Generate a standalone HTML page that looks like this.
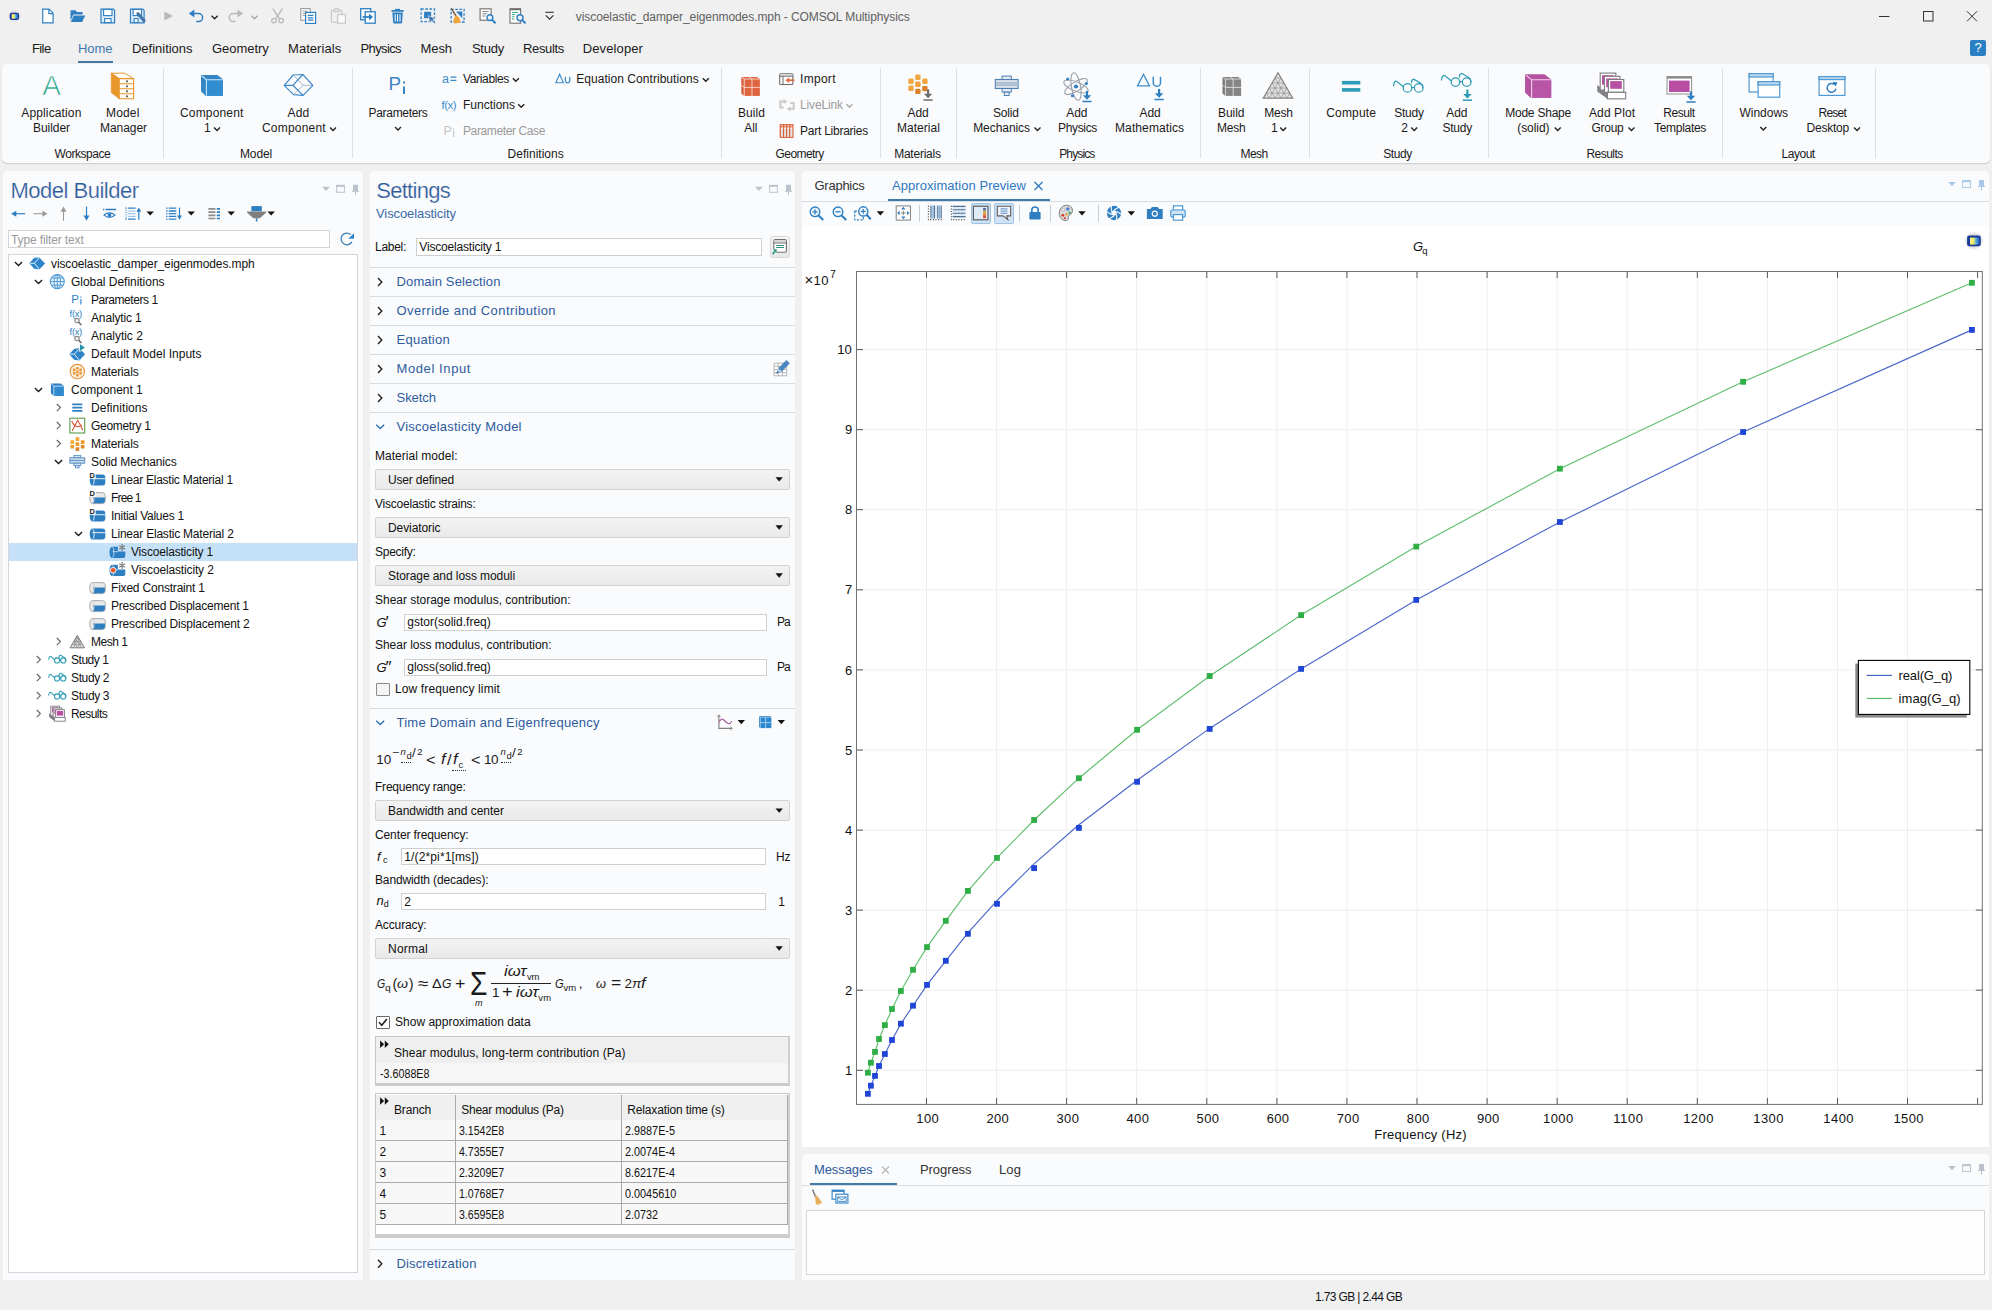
<!DOCTYPE html>
<html><head><meta charset="utf-8"><title>COMSOL Multiphysics</title>
<style>
html,body{margin:0;padding:0;}
body{width:1992px;height:1310px;overflow:hidden;background:#f0f0f0;position:relative;font-family:'Liberation Sans',sans-serif;}
body>div,body>span,body>svg{position:absolute;}
span{white-space:pre;}
svg{overflow:visible;}
</style></head><body>
<span style="left:575.80px;top:11.06px;font-size:12px;line-height:12px;color:#606060;letter-spacing:-0.081px;">viscoelastic_damper_eigenmodes.mph - COMSOL Multiphysics</span>
<svg style="left:7px;top:8px;" width="15" height="16" viewBox="-0.300 -0.500 15.000 16.000"><defs><linearGradient id="LGs" x1="0" y1="0" x2="1" y2="0"><stop offset="0" stop-color="#f6f28a"/><stop offset="0.38" stop-color="#f3e960"/><stop offset="0.62" stop-color="#55b0e6"/><stop offset="1" stop-color="#1f4fae"/></linearGradient><radialGradient id="LHs"><stop offset="0.6" stop-color="#d2d2d7" stop-opacity="1"/><stop offset="1" stop-color="#e8e8ec" stop-opacity="0"/></radialGradient></defs><ellipse cx="7" cy="7.600" rx="6.800" ry="6.400" fill="url(#LHs)"/><rect x="2.4" y="4.2" width="9.4" height="7.2" rx="2.2" fill="#1c3a96"/><path d="M4.4 5.6h6.4v4.6h-6.4z" fill="url(#LGs)"/><path d="M0 5.6h0v4.6h-0z" fill="#1c3a96" opacity="0.0"/></svg>
<svg style="left:39px;top:8px;" width="17" height="16" viewBox="-0.900 0.000 17.000 16.000"><path d="M2.8 1.2h6.4l4 4v9.6H2.8z" fill="#fff" stroke="#2e7fc2" stroke-width="1.2"/><path d="M9 1.4v4.2h4.2" fill="none" stroke="#2e7fc2" stroke-width="1.2"/></svg>
<svg style="left:69px;top:8px;" width="17" height="16" viewBox="-0.700 0.000 17.000 16.000"><path d="M0.8 2.2h5l1.4 1.8h5.6v2.6H3.6L0.8 13z" fill="#2e7fc2"/><path d="M4 7.4h11.6L12.4 14H1.2z" fill="#2e7fc2"/></svg>
<svg style="left:99px;top:8px;" width="17" height="16" viewBox="-0.800 0.000 17.000 16.000"><path d="M1.2 1.2h12.4l1.2 1.2v12.4H1.2z" fill="#dcebf8" stroke="#2e7fc2" stroke-width="1.2"/><rect x="3.8" y="1.4" width="8.4" height="6.2" fill="#fff" stroke="#2e7fc2" stroke-width="1.1"/><rect x="4.8" y="10.6" width="6.4" height="4" fill="#fff" stroke="#2e7fc2" stroke-width="1.1"/></svg>
<svg style="left:129px;top:8px;" width="18" height="16" viewBox="-0.300 0.000 18.000 16.000"><path d="M1.2 1.2h12.4l1.2 1.2v12.4H1.2z" fill="#dcebf8" stroke="#2e7fc2" stroke-width="1.2"/><rect x="3.8" y="1.4" width="8.4" height="6.2" fill="#fff" stroke="#2e7fc2" stroke-width="1.1"/><rect x="4.8" y="10.6" width="4" height="4" fill="#fff" stroke="#2e7fc2" stroke-width="1.1"/><path d="M7.5 5.2l2.2-0.6 7 8.2-2.2 2-7-8z" fill="#3f76ad"/><path d="M7.2 4.6l2.4 0.2-2 1.8z" fill="#2b4f78"/></svg>
<svg style="left:163px;top:11px;" width="11" height="10" viewBox="-0.700 0.000 11.000 10.000"><path d="M0.6 0.4l8.6 4.6-8.6 4.6z" fill="#b9b9b9"/></svg>
<svg style="left:188px;top:9px;" width="17" height="14" viewBox="-0.200 0.000 17.000 14.000"><path d="M5.2 4.6h5.2a4 4 0 0 1 0 8H8" fill="none" stroke="#2e7fc2" stroke-width="1.5"/><path d="M0.6 4.6l5.6-4v8z" fill="#2e7fc2"/></svg>
<svg style="left:210px;top:14px;" width="9" height="7" viewBox="-0.600 -0.500 9.000 7.000"><path d="M1 1.2l3 3 3-3" stroke="#222" stroke-width="1.4" fill="none"/></svg>
<svg style="left:227px;top:9px;" width="17" height="14" viewBox="-0.700 0.000 17.000 14.000"><path d="M10.8 4.6H5.6a4 4 0 0 0 0 8H8" fill="none" stroke="#b9b9b9" stroke-width="1.5"/><path d="M15.4 4.6l-5.6-4v8z" fill="#b9b9b9"/></svg>
<svg style="left:250px;top:14px;" width="9" height="7" viewBox="-0.500 -0.500 9.000 7.000"><path d="M1 1.2l3 3 3-3" stroke="#a8a8a8" stroke-width="1.4" fill="none"/></svg>
<svg style="left:270px;top:8px;" width="15" height="16" viewBox="-0.600 0.000 15.000 16.000"><path d="M2.2 0.6l6.6 10M11.8 0.6l-6.6 10" stroke="#b9b9b9" stroke-width="1.4" fill="none"/><circle cx="3.4" cy="12.6" r="2.3" fill="none" stroke="#b9b9b9" stroke-width="1.3"/><circle cx="10.6" cy="12.6" r="2.3" fill="none" stroke="#b9b9b9" stroke-width="1.3"/></svg>
<svg style="left:300px;top:8px;" width="17" height="16" viewBox="-0.200 0.000 17.000 16.000"><rect x="0.6" y="0.6" width="9.4" height="11.6" fill="#fff" stroke="#9a9a9a" stroke-width="1.1"/><path d="M2.4 3.2h5M2.4 5.4h3M2.4 7.6h3" stroke="#9a9a9a" stroke-width="1"/><rect x="5.4" y="4.4" width="10" height="11" fill="#fff" stroke="#2e7fc2" stroke-width="1.2"/><path d="M7.6 7.4h5.6M7.6 9.8h5.6M7.6 12.2h5.6" stroke="#2e7fc2" stroke-width="1.2"/></svg>
<svg style="left:330px;top:8px;" width="17" height="16" viewBox="-0.400 0.000 17.000 16.000"><rect x="1" y="2.2" width="10.4" height="12" rx="1" fill="#efefef" stroke="#c4c4c4" stroke-width="1.1"/><rect x="3.6" y="0.8" width="5.2" height="3" rx="0.8" fill="#e2e2e2" stroke="#c4c4c4" stroke-width="1"/><rect x="7.2" y="6.6" width="7.8" height="8.6" fill="#fafafa" stroke="#c4c4c4" stroke-width="1.1"/></svg>
<svg style="left:360px;top:8px;" width="16" height="16" viewBox="0.000 0.000 16.000 16.000"><rect x="0.7" y="0.7" width="10" height="11" fill="#fff" stroke="#2e7fc2" stroke-width="1.3"/><rect x="5.2" y="3.8" width="10" height="11.4" fill="#fff" stroke="#2e7fc2" stroke-width="1.3"/><path d="M2.6 9h8" stroke="#2e7fc2" stroke-width="1.8"/><path d="M9 5.6l4 3.4-4 3.4z" fill="#2e7fc2"/></svg>
<svg style="left:390px;top:8px;" width="15" height="16" viewBox="-0.600 0.000 15.000 16.000"><path d="M4.6 0.8h4.8v1.4H4.6z" fill="#2e7fc2"/><rect x="0.8" y="2" width="12.4" height="1.8" rx="0.5" fill="#2e7fc2"/><path d="M1.8 4.6h10.4l-0.7 10a1.2 1.2 0 0 1-1.2 1H3.7a1.2 1.2 0 0 1-1.2-1z" fill="#2e7fc2"/><path d="M4.6 6.2v7.4M7 6.2v7.4M9.4 6.2v7.4" stroke="#fff" stroke-width="1"/></svg>
<svg style="left:420px;top:8px;" width="17" height="16" viewBox="-0.300 0.000 17.000 16.000"><rect x="0.8" y="1" width="13.4" height="12.6" fill="none" stroke="#2e7fc2" stroke-width="1.3" stroke-dasharray="2.6 1.6"/><rect x="3.8" y="3.8" width="7" height="6.4" fill="#2e7fc2"/><path d="M8 7.6l7.6 3.2-3 0.8 2.6 3.2-1.2 1-2.6-3.2-1.8 2.4z" fill="#3f76ad" stroke="#fff" stroke-width="0.5"/></svg>
<svg style="left:449px;top:8px;" width="17" height="16" viewBox="-0.700 0.000 17.000 16.000"><rect x="1.4" y="1.4" width="13" height="12.6" fill="none" stroke="#2e7fc2" stroke-width="1.3" stroke-dasharray="2.6 1.6"/><path d="M6.4 3.6h6.2v6.6z" fill="#2e7fc2"/><path d="M1.6 0.4l5.2 8.4" stroke="#6b4a2a" stroke-width="1.3"/><path d="M5.6 7.6l3.8 1.6 1.4 5.6-6.2 0.8-1-2.4z" fill="#f0a43a"/></svg>
<svg style="left:479px;top:8px;" width="18" height="16" viewBox="-0.300 0.000 18.000 16.000"><rect x="0.8" y="0.8" width="11" height="11.4" fill="#fff" stroke="#7a7a7a" stroke-width="1.2"/><path d="M3 3.6h6.4M3 5.8h5M3 8h3.4" stroke="#8a8a8a" stroke-width="1"/><circle cx="10.6" cy="9.6" r="2.9" fill="#eaf3fb" stroke="#2e7fc2" stroke-width="1.4"/><path d="M12.8 11.8l3.4 3.4" stroke="#2e7fc2" stroke-width="2"/></svg>
<svg style="left:509px;top:8px;" width="18" height="16" viewBox="-0.200 0.000 18.000 16.000"><rect x="0.8" y="0.8" width="10.6" height="14.4" fill="#fff" stroke="#7a7a7a" stroke-width="1.2"/><path d="M0.8 1.4h10.6" stroke="#6a6a6a" stroke-width="1.6"/><path d="M2.8 4.4h6M2.8 6.6h3.4M2.8 8.8h2.4M2.8 11h2.4" stroke="#3aa58a" stroke-width="1"/><circle cx="10.8" cy="9.8" r="3" fill="#eaf3fb" stroke="#2e7fc2" stroke-width="1.4"/><path d="M13 12l3.4 3.4" stroke="#2e7fc2" stroke-width="2"/></svg>
<svg style="left:544px;top:11px;" width="11" height="10" viewBox="-0.600 -0.500 11.000 10.000"><path d="M0.8 0.8h8.4" stroke="#333" stroke-width="1.1"/><path d="M1.2 3.8l3.8 3.8 3.8-3.8" stroke="#333" stroke-width="1.2" fill="none"/></svg>
<svg style="left:1879px;top:11px;" width="100" height="12" viewBox="0.000 0.000 100.000 12.000"><path d="M0 5.5h10.5" stroke="#333" stroke-width="1" fill="none"/><rect x="44.5" y="0.5" width="9.5" height="9.5" fill="none" stroke="#333" stroke-width="1"/><path d="M88 0.3l10 10M98 0.3l-10 10" stroke="#333" stroke-width="1" fill="none"/></svg>
<span style="left:32.00px;top:41.54px;font-size:13px;line-height:13px;color:#1a1a1a;letter-spacing:-0.613px;">File</span>
<span style="left:78.00px;top:41.54px;font-size:13px;line-height:13px;color:#3f78ad;letter-spacing:-0.047px;">Home</span>
<span style="left:132.00px;top:41.54px;font-size:13px;line-height:13px;color:#1a1a1a;letter-spacing:-0.018px;">Definitions</span>
<span style="left:212.00px;top:41.54px;font-size:13px;line-height:13px;color:#1a1a1a;letter-spacing:-0.041px;">Geometry</span>
<span style="left:288.00px;top:41.54px;font-size:13px;line-height:13px;color:#1a1a1a;letter-spacing:0.056px;">Materials</span>
<span style="left:360.50px;top:41.54px;font-size:13px;line-height:13px;color:#1a1a1a;letter-spacing:-0.614px;">Physics</span>
<span style="left:420.50px;top:41.54px;font-size:13px;line-height:13px;color:#1a1a1a;letter-spacing:-0.074px;">Mesh</span>
<span style="left:471.90px;top:41.54px;font-size:13px;line-height:13px;color:#1a1a1a;letter-spacing:-0.230px;">Study</span>
<span style="left:523.00px;top:41.54px;font-size:13px;line-height:13px;color:#1a1a1a;letter-spacing:-0.366px;">Results</span>
<span style="left:582.80px;top:41.54px;font-size:13px;line-height:13px;color:#1a1a1a;letter-spacing:0.104px;">Developer</span>
<div style="left:78px;top:61px;width:34.5px;height:2px;background:#3f7aa8;"></div>
<div style="left:1970px;top:40px;width:16px;height:16px;background:#2b7fc4;border-radius:2px;"></div>
<span style="left:1974.38px;top:41.24px;font-size:13px;line-height:13px;color:#fff;">?</span>
<div style="left:2px;top:63.5px;width:1988px;height:99px;background:#fafbfd;border-radius:5px;box-shadow:0 1px 1.5px rgba(0,0,0,0.16);"></div>
<div style="left:162.5px;top:67.5px;width:1px;height:90px;background:#dcdfe3;"></div>
<div style="left:352.0px;top:67.5px;width:1px;height:90px;background:#dcdfe3;"></div>
<div style="left:721.2px;top:67.5px;width:1px;height:90px;background:#dcdfe3;"></div>
<div style="left:880.0px;top:67.5px;width:1px;height:90px;background:#dcdfe3;"></div>
<div style="left:956.0px;top:67.5px;width:1px;height:90px;background:#dcdfe3;"></div>
<div style="left:1200.0px;top:67.5px;width:1px;height:90px;background:#dcdfe3;"></div>
<div style="left:1309.0px;top:67.5px;width:1px;height:90px;background:#dcdfe3;"></div>
<div style="left:1488.0px;top:67.5px;width:1px;height:90px;background:#dcdfe3;"></div>
<div style="left:1722.0px;top:67.5px;width:1px;height:90px;background:#dcdfe3;"></div>
<div style="left:1875.0px;top:67.5px;width:1px;height:90px;background:#dcdfe3;"></div>
<svg style="left:41px;top:75px;" width="21" height="20" viewBox="-0.500 0.000 21.000 20.000"><text x="10" y="19.900" text-anchor="middle" font-family="Liberation Sans" font-size="28" fill="#23a184" stroke="#fafbfd" stroke-width="0.700">A</text></svg>
<span style="left:21.25px;top:106.96px;font-size:12px;line-height:12px;color:#1a1a1a;letter-spacing:0.139px;">Application</span>
<span style="left:33.00px;top:121.96px;font-size:12px;line-height:12px;color:#1a1a1a;letter-spacing:-0.051px;">Builder</span>
<svg style="left:111px;top:72px;" width="24" height="27" viewBox="0.000 0.000 24.000 27.000"><path d="M0.300 1.200H13.600L22.600 6.650H8.200z" fill="#fffdf6" stroke="#e8952f" stroke-width="1" stroke-linejoin="round"/><path d="M0.300 1.200V20.500L8.200 26.800V6.650z" fill="#e8972b" stroke="#e8952f" stroke-width="0.800" stroke-linejoin="round"/><path d="M8.200 6.650H22.600V26.800H8.200z" fill="#fffdf6" stroke="#e8952f" stroke-width="1.100"/><path d="M8.200 11.800H22.600M8.200 16.800H22.600M8.200 21.700H22.600" stroke="#e8952f" stroke-width="1.100"/><g fill="#5a5a5a"><rect x="15" y="8.400" width="1.900" height="1.800"/><rect x="15" y="13.400" width="1.900" height="1.800"/><rect x="15" y="18.400" width="1.900" height="1.800"/><rect x="15" y="23.400" width="1.900" height="1.800"/></g></svg>
<span style="left:106.00px;top:106.96px;font-size:12px;line-height:12px;color:#1a1a1a;letter-spacing:0.163px;">Model</span>
<span style="left:100.00px;top:121.96px;font-size:12px;line-height:12px;color:#1a1a1a;letter-spacing:-0.054px;">Manager</span>
<span style="left:54.50px;top:148.26px;font-size:12px;line-height:12px;color:#1a1a1a;letter-spacing:-0.446px;">Workspace</span>
<svg style="left:200px;top:74px;" width="24" height="22" viewBox="-0.500 0.000 24.000 22.000"><path d="M0.500 1H16.900L22.500 5.300V21.800H5.200L0.500 17z" fill="#3585c5"/><path d="M5.800 5.300H22.500V21.800H5.800z" fill="#318dcf"/><path d="M0.500 1V17L5.200 21.800H5.800V5.300z" fill="#3585c5"/><path d="M1.100 1.800L5.900 5.700H22.400M5.900 5.700V21.700" stroke="#c5ebff" stroke-width="1.100" fill="none"/></svg>
<span style="left:180.00px;top:106.96px;font-size:12px;line-height:12px;color:#1a1a1a;letter-spacing:0.161px;">Component</span>
<span style="left:204.00px;top:121.96px;font-size:12px;line-height:12px;color:#1a1a1a;letter-spacing:-2.387px;">1</span>
<svg style="left:213px;top:126px;" width="8" height="7" viewBox="0.000 -0.200 8.000 7.000"><path d="M1 1.2l3 3 3-3" stroke="#222" stroke-width="1.4" fill="none"/></svg>
<svg style="left:283px;top:74px;" width="31" height="22" viewBox="-0.500 0.000 31.000 22.000"><g fill="none" stroke="#aab8cc" stroke-width="1"><path d="M9.700 1L19.600 11.300H29.300M19.600 11.300L10 20.600"/></g><g fill="none" stroke="#3f88c9" stroke-width="1.200" stroke-linejoin="round"><path d="M0.700 11.300L9.700 1 19.300 0.500 29.300 11.300 19.600 21.400 10 20.600z"/><path d="M0.700 11.300H9.400L19.300 0.500M9.400 11.300L19.600 21.400"/></g></svg>
<span style="left:287.50px;top:106.96px;font-size:12px;line-height:12px;color:#1a1a1a;letter-spacing:0.214px;">Add</span>
<span style="left:262.00px;top:121.96px;font-size:12px;line-height:12px;color:#1a1a1a;letter-spacing:0.195px;">Component</span>
<svg style="left:329px;top:126px;" width="8" height="7" viewBox="0.000 -0.200 8.000 7.000"><path d="M1 1.2l3 3 3-3" stroke="#222" stroke-width="1.4" fill="none"/></svg>
<span style="left:240.00px;top:148.26px;font-size:12px;line-height:12px;color:#1a1a1a;letter-spacing:-0.138px;">Model</span>
<svg style="left:389px;top:77px;" width="18" height="18" viewBox="0.000 0.000 18.000 18.000"><text x="-0.600" y="13" font-family="Liberation Sans" font-size="18.800" fill="#3d84c4">P</text><path d="M15 9.500v7.400M15 4.400v2.200" stroke="#3d84c4" stroke-width="2"/></svg>
<span style="left:368.50px;top:106.96px;font-size:12px;line-height:12px;color:#1a1a1a;letter-spacing:-0.303px;">Parameters</span>
<svg style="left:394px;top:125px;" width="8" height="7" viewBox="0.000 -0.700 8.000 7.000"><path d="M1 1.2l3 3 3-3" stroke="#222" stroke-width="1.4" fill="none"/></svg>
<svg style="left:442px;top:73px;" width="15" height="11" viewBox="0.000 -0.500 15.000 11.000"><text x="0" y="9" font-family="Liberation Sans" font-size="12.500" fill="#3a8ccc">a</text><path d="M8.400 3.600h6M8.400 6.800h6" stroke="#3a8ccc" stroke-width="1.200"/></svg>
<span style="left:463.00px;top:72.66px;font-size:12px;line-height:12px;color:#1a1a1a;letter-spacing:-0.349px;">Variables</span>
<svg style="left:511px;top:77px;" width="9" height="6" viewBox="-0.800 0.000 9.000 6.000"><path d="M1 1.2l3 3 3-3" stroke="#222" stroke-width="1.4" fill="none"/></svg>
<svg style="left:441px;top:99px;" width="18" height="12" viewBox="-0.500 0.000 18.000 12.000"><text x="0" y="9.600" font-family="Liberation Sans" font-size="11.500" fill="#3a8ccc" letter-spacing="-0.500">f(x)</text></svg>
<span style="left:463.00px;top:98.76px;font-size:12px;line-height:12px;color:#1a1a1a;">Functions</span>
<svg style="left:517px;top:103px;" width="9" height="6" viewBox="-0.200 0.000 9.000 6.000"><path d="M1 1.2l3 3 3-3" stroke="#222" stroke-width="1.4" fill="none"/></svg>
<svg style="left:443px;top:125px;" width="13" height="13" viewBox="-0.500 0.000 13.000 13.000"><text x="0" y="10.400" font-family="Liberation Sans" font-size="12.500" fill="#c4c4c4">P</text><path d="M10.200 5.600v6.400" stroke="#c4c4c4" stroke-width="1.100"/><path d="M10.200 3v1.400" stroke="#c4c4c4" stroke-width="1.100"/></svg>
<span style="left:463.00px;top:124.76px;font-size:12px;line-height:12px;color:#9a9a9a;letter-spacing:-0.384px;">Parameter Case</span>
<svg style="left:555px;top:73px;" width="16" height="11" viewBox="0.000 0.000 16.000 11.000"><path d="M0.800 9.800L4.600 1.200l3.800 8.600z" fill="none" stroke="#3a8ccc" stroke-width="1.100"/><path d="M10.400 3.800v3.800a2.200 2.200 0 0 0 4.400 0V3.800" fill="none" stroke="#3a8ccc" stroke-width="1.200"/></svg>
<span style="left:576.20px;top:72.66px;font-size:12px;line-height:12px;color:#1a1a1a;letter-spacing:0.049px;">Equation Contributions</span>
<svg style="left:701px;top:77px;" width="9" height="6" viewBox="-0.800 0.000 9.000 6.000"><path d="M1 1.2l3 3 3-3" stroke="#222" stroke-width="1.4" fill="none"/></svg>
<span style="left:507.50px;top:148.26px;font-size:12px;line-height:12px;color:#1a1a1a;letter-spacing:0.024px;">Definitions</span>
<svg style="left:740px;top:76px;" width="21" height="21" viewBox="-0.500 0.000 21.000 21.000"><path d="M0.800 1H16.400L19.400 3H3.700z" fill="#dc6440"/><path d="M0.800 1V17.600L3.700 19.900V3z" fill="#d65c3a"/><path d="M3.700 3H19.400V19.900H3.700z" fill="#de6540"/><path d="M3.700 3H19.400M3.700 3V19.900M11.500 3V19.900M3.700 11.400H19.400M0.800 1L3.700 3M8.500 1L11.500 3M0.800 9.200L3.700 11.400" stroke="#fbd9cc" stroke-width="0.900" fill="none"/></svg>
<span style="left:738.00px;top:106.96px;font-size:12px;line-height:12px;color:#1a1a1a;letter-spacing:0.062px;">Build</span>
<span style="left:744.20px;top:121.96px;font-size:12px;line-height:12px;color:#1a1a1a;letter-spacing:-0.015px;">All</span>
<svg style="left:779px;top:73px;" width="16" height="12" viewBox="0.000 0.000 16.000 12.000"><rect x="0.700" y="0.700" width="13.200" height="10.800" rx="1" fill="#fff" stroke="#6a6a6a" stroke-width="1.100"/><path d="M1.200 1.300h12.200v1.400H1.200z" fill="#dcdcdc"/><path d="M0.700 3.200h13.200M4 3.200v8" stroke="#6a6a6a" stroke-width="1"/><path d="M15.400 7.200H9" stroke="#e0673c" stroke-width="1.700"/><path d="M10.200 4.400L6.400 7.200l3.800 2.800z" fill="#e0673c"/></svg>
<span style="left:800.00px;top:72.66px;font-size:12px;line-height:12px;color:#1a1a1a;letter-spacing:0.297px;">Import</span>
<svg style="left:778px;top:99px;" width="18" height="12" viewBox="-0.500 0.000 18.000 12.000"><g fill="none" stroke="#c9c9c9" stroke-width="2"><path d="M5.400 2.600H1.800v5.800h3.400"/><path d="M11.600 9.800h3.600V4h-3.400"/></g><path d="M5 0l3.800 2.600L5 5.200zM12 12.400l-3.800-2.600L12 7.200z" fill="#c9c9c9"/></svg>
<span style="left:800.00px;top:98.76px;font-size:12px;line-height:12px;color:#9a9a9a;letter-spacing:-0.129px;">LiveLink</span>
<svg style="left:845px;top:103px;" width="9" height="6" viewBox="-0.500 0.000 9.000 6.000"><path d="M1 1.2l3 3 3-3" stroke="#a8a8a8" stroke-width="1.4" fill="none"/></svg>
<svg style="left:779px;top:124px;" width="15" height="14" viewBox="-0.600 0.000 15.000 14.000"><rect x="0.700" y="0.700" width="12.600" height="12.600" fill="#fff" stroke="#d9663f" stroke-width="1.300"/><path d="M1.400 5h11.200v7.600H1.400z" fill="#e6e6e6"/><path d="M3.900 0.700v12.600M7 0.700v12.600M10.100 0.700v12.600" stroke="#d9663f" stroke-width="1.300"/><path d="M1.400 2.800h1.400M4.500 2.800h1.400M7.600 2.800h1.400M10.700 2.800h1.400" stroke="#d9663f" stroke-width="1.600"/></svg>
<span style="left:800.00px;top:124.76px;font-size:12px;line-height:12px;color:#1a1a1a;letter-spacing:-0.241px;">Part Libraries</span>
<span style="left:775.50px;top:148.26px;font-size:12px;line-height:12px;color:#1a1a1a;letter-spacing:-0.561px;">Geometry</span>
<svg style="left:907px;top:74px;" width="26" height="27" viewBox="-0.500 0.000 26.000 27.000"><rect x="0.8" y="4.6" width="5.400" height="5.400" rx="1.300" fill="#f0a742"/><rect x="0.8" y="11.6" width="5.400" height="5.400" rx="1.300" fill="#f0a742"/><rect x="7.7" y="0.6" width="5.400" height="5.400" rx="1.300" fill="#f0a742"/><rect x="7.7" y="7.6" width="5.400" height="5.400" rx="1.300" fill="#f2a238"/><rect x="7.7" y="14.7" width="5.400" height="5.400" rx="1.300" fill="#d9822b"/><rect x="14.7" y="4.6" width="5.400" height="5.400" rx="1.300" fill="#f0a742"/><rect x="14.7" y="11.9" width="5.400" height="5.400" rx="1.300" fill="#d9822b"/><path d="M20.6 15.4v6" stroke="#6e6e6e" stroke-width="2.200"/><path d="M16.400000000000002 19.8h8.400l-4.200 4.400z" fill="#6e6e6e"/><path d="M16.0 26.0h9.200" stroke="#6e6e6e" stroke-width="1.500"/></svg>
<span style="left:907.50px;top:106.96px;font-size:12px;line-height:12px;color:#1a1a1a;letter-spacing:-0.053px;">Add</span>
<span style="left:897.00px;top:121.96px;font-size:12px;line-height:12px;color:#1a1a1a;letter-spacing:0.039px;">Material</span>
<span style="left:894.20px;top:148.26px;font-size:12px;line-height:12px;color:#1a1a1a;letter-spacing:-0.243px;">Materials</span>
<svg style="left:994px;top:75px;" width="25" height="22" viewBox="-0.700 -0.500 25.000 22.000"><rect x="7.400" y="0.600" width="9.200" height="3.400" fill="#e6ecf4" stroke="#4f7fb5" stroke-width="1"/><rect x="0.600" y="4" width="22.800" height="9" fill="#d9e1ec" stroke="#4f7fb5" stroke-width="1.100"/><rect x="1.200" y="7" width="21.600" height="3" fill="#b4c3d6"/><path d="M1.200 7h21.600M1.200 10h21.600" stroke="#9fb3cc" stroke-width="0.700"/><rect x="7.400" y="13" width="9.200" height="3.600" fill="#e6ecf4" stroke="#4f7fb5" stroke-width="1"/><rect x="9.600" y="16.600" width="4.800" height="3.400" fill="#e6ecf4" stroke="#4f7fb5" stroke-width="1"/></svg>
<span style="left:993.00px;top:106.96px;font-size:12px;line-height:12px;color:#1a1a1a;letter-spacing:-0.197px;">Solid</span>
<span style="left:973.20px;top:121.96px;font-size:12px;line-height:12px;color:#1a1a1a;letter-spacing:-0.062px;">Mechanics</span>
<svg style="left:1033px;top:126px;" width="9" height="7" viewBox="-0.500 -0.200 9.000 7.000"><path d="M1 1.2l3 3 3-3" stroke="#222" stroke-width="1.4" fill="none"/></svg>
<svg style="left:1063px;top:71px;" width="29" height="32" viewBox="0.000 -0.500 29.000 32.000"><g fill="none" stroke="#9aa0a8" stroke-width="1.100"><ellipse cx="13" cy="15" rx="14" ry="4.600" transform="rotate(80 13 15)"/><ellipse cx="13" cy="15" rx="13" ry="4.600" transform="rotate(22 13 15)"/><ellipse cx="13" cy="15" rx="13" ry="4.600" transform="rotate(-32 13 15)"/></g><circle cx="13" cy="15" r="2.100" fill="#2e7fc2"/><circle cx="4.600" cy="7.400" r="1.500" fill="#2e7fc2"/><circle cx="23.400" cy="12" r="1.500" fill="#2e7fc2"/><circle cx="9.400" cy="24.200" r="1.500" fill="#2e7fc2"/><path d="M24 19.4v6" stroke="#2e7fc2" stroke-width="2.200"/><path d="M19.8 23.799999999999997h8.400l-4.200 4.400z" fill="#2e7fc2"/><path d="M19.4 30.0h9.200" stroke="#2e7fc2" stroke-width="1.500"/></svg>
<span style="left:1066.20px;top:106.96px;font-size:12px;line-height:12px;color:#1a1a1a;letter-spacing:-0.020px;">Add</span>
<span style="left:1058.00px;top:121.96px;font-size:12px;line-height:12px;color:#1a1a1a;letter-spacing:-0.335px;">Physics</span>
<svg style="left:1136px;top:73px;" width="29" height="28" viewBox="-0.500 -0.500 29.000 28.000"><path d="M1 12.400L7 0.800l6 11.600z" fill="none" stroke="#3a8ccc" stroke-width="1.300"/><path d="M16.800 3.200v6a3.600 3.600 0 0 0 7.200 0v-6" fill="none" stroke="#3a8ccc" stroke-width="1.500"/><path d="M22.6 15.4v6" stroke="#2e7fc2" stroke-width="2.200"/><path d="M18.400000000000002 19.8h8.400l-4.200 4.400z" fill="#2e7fc2"/><path d="M18.0 26.0h9.200" stroke="#2e7fc2" stroke-width="1.500"/></svg>
<span style="left:1139.50px;top:106.96px;font-size:12px;line-height:12px;color:#1a1a1a;letter-spacing:-0.120px;">Add</span>
<span style="left:1115.00px;top:121.96px;font-size:12px;line-height:12px;color:#1a1a1a;letter-spacing:0.106px;">Mathematics</span>
<span style="left:1059.20px;top:148.26px;font-size:12px;line-height:12px;color:#1a1a1a;letter-spacing:-0.863px;">Physics</span>
<svg style="left:1221px;top:76px;" width="21" height="21" viewBox="-0.700 0.000 21.000 21.000"><path d="M0.800 1H16.400L19.400 3H3.700z" fill="#808080"/><path d="M0.800 1V17.600L3.700 19.900V3z" fill="#777777"/><path d="M3.700 3H19.400V19.900H3.700z" fill="#858585"/><path d="M3.700 3H19.400M3.700 3V19.900M11.500 3V19.900M3.700 11.400H19.400M0.800 1L3.700 3M8.500 1L11.500 3M0.800 9.200L3.700 11.400" stroke="#dedede" stroke-width="0.900" fill="none"/></svg>
<span style="left:1218.00px;top:106.96px;font-size:12px;line-height:12px;color:#1a1a1a;letter-spacing:-0.037px;">Build</span>
<span style="left:1217.00px;top:121.96px;font-size:12px;line-height:12px;color:#1a1a1a;letter-spacing:-0.211px;">Mesh</span>
<svg style="left:1262px;top:72px;" width="32" height="27" viewBox="-0.500 0.000 32.000 27.000"><path d="M15.500 0.800L30.200 26.200H0.800z" fill="#e2e2e2" stroke="#808080" stroke-width="1.200"/><path d="M12.6 5.9L18.4 5.9M6.7 26.2L18.4 5.9M6.7 26.2L3.7 21.1M9.6 11.0L21.4 11.0M12.6 26.2L21.4 11.0M12.6 26.2L6.7 16.0M6.7 16.0L24.3 16.0M18.4 26.2L24.3 16.0M18.4 26.2L9.6 11.0M3.7 21.1L27.3 21.1M24.3 26.2L27.3 21.1M24.3 26.2L12.6 5.9" stroke="#8e8e8e" stroke-width="0.700" fill="none"/></svg>
<span style="left:1264.20px;top:106.96px;font-size:12px;line-height:12px;color:#1a1a1a;letter-spacing:-0.211px;">Mesh</span>
<span style="left:1271.00px;top:121.96px;font-size:12px;line-height:12px;color:#1a1a1a;letter-spacing:-2.688px;">1</span>
<svg style="left:1279px;top:126px;" width="9" height="7" viewBox="-0.200 -0.200 9.000 7.000"><path d="M1 1.2l3 3 3-3" stroke="#222" stroke-width="1.4" fill="none"/></svg>
<span style="left:1240.50px;top:148.26px;font-size:12px;line-height:12px;color:#1a1a1a;letter-spacing:-0.586px;">Mesh</span>
<svg style="left:1341px;top:80px;" width="20" height="13" viewBox="-0.700 -0.200 20.000 13.000"><rect x="0.200" y="0.700" width="18.400" height="3.600" fill="#2a9bb4"/><rect x="0.200" y="7.900" width="18.400" height="3.600" fill="#2a9bb4"/></svg>
<span style="left:1326.20px;top:106.96px;font-size:12px;line-height:12px;color:#1a1a1a;letter-spacing:0.185px;">Compute</span>
<svg style="left:1393px;top:78px;" width="31" height="16" viewBox="-0.200 -0.500 31.000 16.000"><g transform="translate(0 0.3)" fill="none" stroke="#2a9bb4" stroke-width="1.200" stroke-linecap="round"><path d="M0.400 7.100C0.400 3.600 2.200 1.600 3.800 2.800L9.900 7.700"/><circle cx="14.300" cy="9.100" r="4.300"/><circle cx="25.500" cy="9.100" r="4.300"/><path d="M18.600 8.700H21.200"/><path d="M18.300 4.100C18.200 1.500 19.200 0.200 20.800 0.600L27.300 4.300C28.900 5.400 29.700 7 29.700 8.700"/></g></svg>
<span style="left:1394.20px;top:106.96px;font-size:12px;line-height:12px;color:#1a1a1a;letter-spacing:-0.237px;">Study</span>
<span style="left:1401.20px;top:121.96px;font-size:12px;line-height:12px;color:#1a1a1a;letter-spacing:-1.188px;">2</span>
<svg style="left:1410px;top:126px;" width="9" height="7" viewBox="-0.200 -0.200 9.000 7.000"><path d="M1 1.2l3 3 3-3" stroke="#222" stroke-width="1.4" fill="none"/></svg>
<svg style="left:1441px;top:73px;" width="32" height="28" viewBox="-0.200 0.000 32.000 28.000"><g transform="translate(0 0)" fill="none" stroke="#2a9bb4" stroke-width="1.200" stroke-linecap="round"><path d="M0.400 7.100C0.400 3.600 2.200 1.600 3.800 2.800L9.900 7.700"/><circle cx="14.300" cy="9.100" r="4.300"/><circle cx="25.500" cy="9.100" r="4.300"/><path d="M18.600 8.700H21.200"/><path d="M18.300 4.100C18.200 1.500 19.200 0.200 20.800 0.600L27.300 4.300C28.900 5.400 29.700 7 29.700 8.700"/></g><path d="M26.2 16.6v6" stroke="#2a9bb4" stroke-width="2.200"/><path d="M22.0 21.0h8.400l-4.200 4.400z" fill="#2a9bb4"/><path d="M21.6 27.200000000000003h9.200" stroke="#2a9bb4" stroke-width="1.500"/></svg>
<span style="left:1446.20px;top:106.96px;font-size:12px;line-height:12px;color:#1a1a1a;letter-spacing:-0.020px;">Add</span>
<span style="left:1442.50px;top:121.96px;font-size:12px;line-height:12px;color:#1a1a1a;letter-spacing:-0.237px;">Study</span>
<span style="left:1383.20px;top:148.26px;font-size:12px;line-height:12px;color:#1a1a1a;letter-spacing:-0.377px;">Study</span>
<svg style="left:1524px;top:73px;" width="28" height="26" viewBox="-0.700 -0.200 28.000 26.000"><path d="M0.500 1H19.800L26.500 6.200V24.600H6.200L0.500 19.400z" fill="#b352a0"/><path d="M6.800 6.200H26.500V24.600H6.800z" fill="#b955a6"/><path d="M0.500 1V19.400L6.200 24.600H6.800V6.200z" fill="#b352a0"/><path d="M1.100 1.800L6.900 6.600H26.400M6.900 6.600V24.500" stroke="#f3d3ec" stroke-width="1.100" fill="none"/></svg>
<span style="left:1505.20px;top:106.96px;font-size:12px;line-height:12px;color:#1a1a1a;letter-spacing:-0.226px;">Mode Shape</span>
<span style="left:1517.20px;top:121.96px;font-size:12px;line-height:12px;color:#1a1a1a;letter-spacing:-0.053px;">(solid)</span>
<svg style="left:1553px;top:126px;" width="9" height="7" viewBox="-0.700 -0.200 9.000 7.000"><path d="M1 1.2l3 3 3-3" stroke="#222" stroke-width="1.4" fill="none"/></svg>
<svg style="left:1597px;top:72px;" width="29" height="27" viewBox="0.000 0.000 29.000 27.000"><path d="M0.250 13.100V19.500L10.400 26.800V20.400z" fill="#808285"/><rect x="3.200" y="1.100" width="15.600" height="17" fill="#fff" stroke="#7c7c7e" stroke-width="1.100"/><rect x="5" y="3.200" width="11.800" height="9.400" fill="#b84fa3"/><rect x="7.400" y="4.300" width="15.500" height="16" fill="#fff" stroke="#7c7c7e" stroke-width="1.100"/><rect x="9.200" y="6.400" width="11.700" height="8.800" fill="#b84fa3"/><rect x="11.400" y="7.500" width="15.400" height="12.800" fill="#fff" stroke="#7c7c7e" stroke-width="1.100"/><rect x="13.200" y="9.100" width="11.600" height="7.700" fill="#b84fa3"/><rect x="10.400" y="20.300" width="18.300" height="6.500" fill="#fff" stroke="#7c7c7e" stroke-width="1.100"/></svg>
<span style="left:1589.00px;top:106.96px;font-size:12px;line-height:12px;color:#1a1a1a;letter-spacing:0.103px;">Add Plot</span>
<span style="left:1591.50px;top:121.96px;font-size:12px;line-height:12px;color:#1a1a1a;letter-spacing:-0.272px;">Group</span>
<svg style="left:1627px;top:126px;" width="9" height="7" viewBox="-0.500 -0.200 9.000 7.000"><path d="M1 1.2l3 3 3-3" stroke="#222" stroke-width="1.4" fill="none"/></svg>
<svg style="left:1666px;top:76px;" width="31" height="26" viewBox="-0.400 0.000 31.000 26.000"><rect x="0.600" y="0.600" width="24.600" height="17.400" fill="#fff" stroke="#9a9a9a" stroke-width="1.100"/><path d="M0.600 1.600h24.600" stroke="#8a8a8a" stroke-width="2"/><rect x="2.600" y="4.600" width="20.600" height="11.400" fill="#b84fa3"/><path d="M24.6 15.4v6" stroke="#2e7fc2" stroke-width="2.200"/><path d="M20.400000000000002 19.8h8.400l-4.200 4.400z" fill="#2e7fc2"/><path d="M20.0 26.0h9.200" stroke="#2e7fc2" stroke-width="1.500"/></svg>
<span style="left:1663.20px;top:106.96px;font-size:12px;line-height:12px;color:#1a1a1a;letter-spacing:-0.419px;">Result</span>
<span style="left:1654.00px;top:121.96px;font-size:12px;line-height:12px;color:#1a1a1a;letter-spacing:-0.300px;">Templates</span>
<span style="left:1586.50px;top:148.26px;font-size:12px;line-height:12px;color:#1a1a1a;letter-spacing:-0.545px;">Results</span>
<svg style="left:1748px;top:73px;" width="33" height="25" viewBox="-0.500 0.000 33.000 25.000"><rect x="0.600" y="0.600" width="24" height="18.400" fill="#fff" stroke="#4d9ad6" stroke-width="1.200"/><rect x="0.600" y="0.600" width="24" height="3.400" fill="#b9d6ee" stroke="#4d9ad6" stroke-width="1.200"/><rect x="9.600" y="8.600" width="21.600" height="15.600" fill="#fff" stroke="#4d9ad6" stroke-width="1.200"/><rect x="9.600" y="8.600" width="21.600" height="3.400" fill="#b9d6ee" stroke="#4d9ad6" stroke-width="1.200"/></svg>
<span style="left:1739.50px;top:106.96px;font-size:12px;line-height:12px;color:#1a1a1a;letter-spacing:-0.027px;">Windows</span>
<svg style="left:1759px;top:125px;" width="9" height="7" viewBox="-0.300 -0.700 9.000 7.000"><path d="M1 1.2l3 3 3-3" stroke="#222" stroke-width="1.4" fill="none"/></svg>
<svg style="left:1818px;top:76px;" width="28" height="20" viewBox="-0.500 0.000 28.000 20.000"><rect x="0.600" y="0.600" width="25.800" height="18.800" fill="#fff" stroke="#4d9ad6" stroke-width="1.200"/><rect x="0.600" y="0.600" width="25.800" height="3" fill="#b9d6ee" stroke="#4d9ad6" stroke-width="1.200"/><path d="M17.400 12.600a4.400 4.400 0 1 1-1.600-4.200" fill="none" stroke="#2e7fc2" stroke-width="1.400"/><path d="M14.200 5.800l4.800 0.600-2 4z" fill="#2e7fc2"/></svg>
<span style="left:1818.50px;top:106.96px;font-size:12px;line-height:12px;color:#1a1a1a;letter-spacing:-0.772px;">Reset</span>
<span style="left:1806.50px;top:121.96px;font-size:12px;line-height:12px;color:#1a1a1a;letter-spacing:-0.219px;">Desktop</span>
<svg style="left:1853px;top:126px;" width="8" height="7" viewBox="0.000 -0.200 8.000 7.000"><path d="M1 1.2l3 3 3-3" stroke="#222" stroke-width="1.4" fill="none"/></svg>
<span style="left:1781.50px;top:148.26px;font-size:12px;line-height:12px;color:#1a1a1a;letter-spacing:-0.472px;">Layout</span>
<div style="left:3px;top:170.5px;width:359.6px;height:1109.5px;background:#fafbfd;border-radius:4px 4px 0 0;"></div>
<span style="left:10.50px;top:179.86px;font-size:22px;line-height:22px;color:#2f5a9b;letter-spacing:-0.501px;-webkit-text-stroke:0.22px #fafbfd;">Model Builder</span>
<svg style="left:321px;top:183px;" width="40" height="13" viewBox="0.000 0.000 40.000 13.000"><path d="M1 3.800h8l-4 4.200z" fill="#bcc3cc"/><rect x="15.600" y="2.400" width="7.800" height="6.900" fill="none" stroke="#bcc3cc" stroke-width="1"/><path d="M15.100 2.900h8.800" stroke="#bcc3cc" stroke-width="2"/><path d="M32 1.800h5v6h-5zM31 7.800h7v1h-7zM34 8.800h1v3.400h-1z" fill="#bcc3cc"/></svg>
<svg style="left:10px;top:209px;" width="16" height="9" viewBox="-0.500 -0.700 16.000 9.000"><path d="M4 4h10.600" stroke="#2e7fc2" stroke-width="1.200"/><path d="M0.600 4L5.800 1v6z" fill="#2e7fc2"/></svg>
<svg style="left:33px;top:209px;" width="16" height="9" viewBox="-0.200 -0.700 16.000 9.000"><path d="M0.400 4h10.600" stroke="#9a9a9a" stroke-width="1.100"/><path d="M14.400 4L9.200 1v6z" fill="#9a9a9a"/></svg>
<svg style="left:59px;top:206px;" width="9" height="16" viewBox="-0.500 -0.200 9.000 16.000"><path d="M4 4v10.600" stroke="#9a9a9a" stroke-width="1.100"/><path d="M4 0.400L1 5.600h6z" fill="#9a9a9a"/></svg>
<svg style="left:82px;top:206px;" width="9" height="16" viewBox="-0.500 -0.200 9.000 16.000"><path d="M4 0.400v10.600" stroke="#2e7fc2" stroke-width="1.200"/><path d="M4 14.600L1 9.400h6z" fill="#2e7fc2"/></svg>
<svg style="left:102px;top:208px;" width="15" height="11" viewBox="-0.500 -0.700 15.000 11.000"><path d="M0.400 0.900h1.400M3 0.900h10.600" stroke="#2e7fc2" stroke-width="1.500"/><path d="M1.400 6.400q5.600-4.600 11.200 0q-5.600 4.600-11.200 0z" fill="none" stroke="#2e7fc2" stroke-width="1.200"/><circle cx="7" cy="6.400" r="1.900" fill="#2e7fc2"/></svg>
<svg style="left:125px;top:207px;" width="16" height="14" viewBox="0.000 -0.200 16.000 14.000"><path d="M0.400 1h1.400M3 1h7.600M0.400 12h1.400M3 12h7.600" stroke="#2e7fc2" stroke-width="1.300"/><path d="M3 3.800h7.600M3 6.500h7.600M3 9.200h7.600" stroke="#86b6e0" stroke-width="0.900"/><path d="M1.100 2.600v8.400" stroke="#2e7fc2" stroke-width="1" stroke-dasharray="1 1.300"/><path d="M13.800 4v8.600" stroke="#2e7fc2" stroke-width="1.200"/><path d="M13.800 0.400L11.400 4.600h4.800z" fill="#2e7fc2"/></svg>
<svg style="left:146px;top:211px;" width="9" height="6" viewBox="-0.200 -0.100 9.000 6.000"><path d="M0.3 0.3h7.4l-3.7 4.2z" fill="#111"/></svg>
<svg style="left:165px;top:207px;" width="17" height="14" viewBox="-0.700 -0.200 17.000 14.000"><path d="M0.400 1h1.400M3 1h7.600M0.400 3.800h1.400M3 3.800h7.600M0.400 6.500h1.400M3 6.500h7.600M0.400 9.200h1.400M3 9.200h7.600M0.400 12h1.400M3 12h7.600" stroke="#2e7fc2" stroke-width="1.300"/><path d="M13.800 0.400v8.600" stroke="#2e7fc2" stroke-width="1.200"/><path d="M13.800 12.600L11.400 8.400h4.800z" fill="#2e7fc2"/></svg>
<svg style="left:187px;top:211px;" width="9" height="6" viewBox="-0.200 -0.100 9.000 6.000"><path d="M0.3 0.3h7.4l-3.7 4.2z" fill="#111"/></svg>
<svg style="left:208px;top:207px;" width="13" height="13" viewBox="-0.200 -0.700 13.000 13.000"><path d="M0.200 1.200h7M0.200 4.400h7M0.200 7.600h7M0.200 10.800h7" stroke="#8a8a8a" stroke-width="1.700"/><path d="M8.600 1.200h3.200M8.600 4.400h3.200M8.600 7.600h3.200M8.600 10.800h3.200" stroke="#2e7fc2" stroke-width="1.700"/></svg>
<svg style="left:227px;top:211px;" width="9" height="6" viewBox="-0.200 -0.100 9.000 6.000"><path d="M0.3 0.3h7.4l-3.7 4.2z" fill="#111"/></svg>
<svg style="left:246px;top:205px;" width="21" height="17" viewBox="-0.600 -0.700 21.000 17.000"><rect x="4.800" y="0.400" width="10.400" height="5.200" fill="#2e7fc2"/><path d="M0.400 5.800h19.200v1l-6.400 5.800H6.800L0.400 6.800z" fill="#7f7f7f"/><path d="M10 12.600v3.200" stroke="#2e7fc2" stroke-width="1.600"/></svg>
<svg style="left:267px;top:211px;" width="9" height="6" viewBox="-0.200 -0.100 9.000 6.000"><path d="M0.3 0.3h7.4l-3.7 4.2z" fill="#111"/></svg>
<div style="left:8px;top:230px;width:322px;height:18px;background:#fff;border:1px solid #d4d4d6;box-sizing:border-box;"></div>
<span style="left:11.00px;top:234.16px;font-size:12px;line-height:12px;color:#9a9a9a;letter-spacing:-0.125px;">Type filter text</span>
<svg style="left:339px;top:230px;" width="17" height="16" viewBox="-0.200 -0.800 17.000 16.000"><path d="M12.720 11A5.800 5.800 0 1 1 11.430 3.660" fill="none" stroke="#3d7fb8" stroke-width="1.350"/><path d="M14.800 2.500V8H9z" fill="#2f86cc"/></svg>
<div style="left:8px;top:254px;width:349.5px;height:1018.5px;background:#fff;border:1px solid #d6d6d9;box-sizing:border-box;"></div>
<svg style="left:14px;top:260px;" width="9" height="7" viewBox="0.000 -0.900 9.000 7.000"><path d="M0.900 1l3.600 3.600L8.100 1" stroke="#1a1a1a" stroke-width="1.350" fill="none"/></svg>
<svg style="left:29px;top:257px;" width="17" height="14" viewBox="-0.300 -0.100 17.000 14.000"><path d="M0 6.2L4.900 0.7L10 0.3L15.800 6.3L10 12.4L4.900 11.700000000000001z" fill="#2f84c8"/><path d="M0.600 6.2H5.100L10 0.6M5.100 6.2L10 12.200000000000001" stroke="#d6f0ff" stroke-width="1" fill="none"/></svg>
<span style="left:51.00px;top:257.56px;font-size:12px;line-height:12px;color:#111;letter-spacing:-0.116px;">viscoelastic_damper_eigenmodes.mph</span>
<svg style="left:34px;top:278px;" width="9" height="7" viewBox="0.000 -0.900 9.000 7.000"><path d="M0.900 1l3.600 3.600L8.100 1" stroke="#1a1a1a" stroke-width="1.350" fill="none"/></svg>
<svg style="left:49px;top:273px;" width="17" height="17" viewBox="-0.300 -0.600 17.000 17.000"><circle cx="8" cy="8" r="7" fill="#eef5fb" stroke="#4d9ad6" stroke-width="1.1"/><ellipse cx="8" cy="8" rx="3.2" ry="7" fill="none" stroke="#4d9ad6" stroke-width="1"/><path d="M8 1v14M1.2 8h13.6M2.2 4.4h11.6M2.2 11.6h11.6" stroke="#4d9ad6" stroke-width="1"/></svg>
<span style="left:71.00px;top:275.56px;font-size:12px;line-height:12px;color:#111;letter-spacing:-0.031px;">Global Definitions</span>
<svg style="left:71px;top:293px;" width="13" height="13" viewBox="-0.300 -0.600 13.000 13.000"><text x="0" y="9.6" font-family="Liberation Sans" font-size="11.5" fill="#2e7fc2">P</text><path d="M9.6 5.4v5.4" stroke="#2e7fc2" stroke-width="1.1"/><path d="M9.6 3v1.2" stroke="#2e7fc2" stroke-width="1.1"/></svg>
<span style="left:91.00px;top:293.56px;font-size:12px;line-height:12px;color:#111;letter-spacing:-0.444px;">Parameters 1</span>
<svg style="left:69px;top:309px;" width="16" height="17" viewBox="-0.800 -0.600 16.000 17.000"><text x="-0.200" y="7.600" font-family="Liberation Sans" font-size="9.500" fill="#2e7fc2" letter-spacing="-0.350">f(x)</text><circle cx="7.200" cy="11" r="2.200" fill="#f4f4f4" stroke="#8a8a8a" stroke-width="1.100"/><path d="M8.800 12.600l2.800 2.800" stroke="#6a6a6a" stroke-width="1.600"/></svg>
<span style="left:91.00px;top:311.56px;font-size:12px;line-height:12px;color:#111;letter-spacing:-0.143px;">Analytic 1</span>
<svg style="left:69px;top:327px;" width="16" height="17" viewBox="-0.800 -0.600 16.000 17.000"><text x="-0.200" y="7.600" font-family="Liberation Sans" font-size="9.500" fill="#2e7fc2" letter-spacing="-0.350">f(x)</text><circle cx="7.200" cy="11" r="2.200" fill="#f4f4f4" stroke="#8a8a8a" stroke-width="1.100"/><path d="M8.800 12.600l2.800 2.800" stroke="#6a6a6a" stroke-width="1.600"/></svg>
<span style="left:91.00px;top:329.56px;font-size:12px;line-height:12px;color:#111;letter-spacing:-0.023px;">Analytic 2</span>
<svg style="left:69px;top:344px;" width="17" height="18" viewBox="-0.300 -0.100 17.000 18.000"><path d="M0 10.100000000000001L4.900 4.6000000000000005L10 4.2L15.800 10.2L10 16.3L4.900 15.600000000000001z" fill="#2f84c8"/><path d="M0.600 10.100000000000001H5.100L10 4.5M5.100 10.100000000000001L10 16.1" stroke="#d6f0ff" stroke-width="1" fill="none"/><path d="M10.700 0.200L15.600 3.400L10.700 6.800z" fill="#1f94ab" stroke="#ffffff" stroke-width="1.300" paint-order="stroke"/></svg>
<span style="left:91.00px;top:347.56px;font-size:12px;line-height:12px;color:#111;letter-spacing:0.022px;">Default Model Inputs</span>
<svg style="left:69px;top:363px;" width="17" height="17" viewBox="-0.300 -0.600 17.000 17.000"><circle cx="8" cy="8" r="7.2" fill="#fdf3e3" stroke="#e8963a" stroke-width="1.1"/><g fill="#e8963a"><rect x="3.6" y="5" width="2.6" height="2.6" rx="0.5"/><rect x="6.8" y="3.4" width="2.6" height="2.6" rx="0.5"/><rect x="10" y="5" width="2.6" height="2.6" rx="0.5"/><rect x="3.6" y="8.4" width="2.6" height="2.6" rx="0.5"/><rect x="6.8" y="6.8" width="2.6" height="2.6" rx="0.5"/><rect x="10" y="8.4" width="2.6" height="2.6" rx="0.5"/><rect x="6.8" y="10.2" width="2.6" height="2.6" rx="0.5"/></g></svg>
<span style="left:91.00px;top:365.56px;font-size:12px;line-height:12px;color:#111;letter-spacing:-0.121px;">Materials</span>
<svg style="left:34px;top:386px;" width="9" height="7" viewBox="0.000 -0.900 9.000 7.000"><path d="M0.900 1l3.600 3.600L8.100 1" stroke="#1a1a1a" stroke-width="1.350" fill="none"/></svg>
<svg style="left:50px;top:382px;" width="15" height="15" viewBox="-0.300 -0.600 15.000 15.000"><path d="M0.600 0.800H10.600L13.400 3.400V13.400H3.400L0.600 10.600z" fill="#2f7dc0"/><path d="M3.600 3.600H13.400V13.400H3.600z" fill="#3188cc"/><path d="M1 1.200L3.500 3.500H13.300M3.500 3.500V13.300" stroke="#c5e7fb" stroke-width="0.900" fill="none"/></svg>
<span style="left:71.00px;top:383.56px;font-size:12px;line-height:12px;color:#111;letter-spacing:-0.032px;">Component 1</span>
<svg style="left:55px;top:403px;" width="7" height="10" viewBox="-0.800 -0.100 7.000 10.000"><path d="M1 0.900l3.600 3.600L1 8.100" stroke="#666" stroke-width="1.200" fill="none"/></svg>
<svg style="left:72px;top:403px;" width="11" height="10" viewBox="-0.300 -0.100 11.000 10.000"><path d="M0 1.2h10M0 4.5h10M0 7.8h10" stroke="#2e7fc2" stroke-width="1.7"/></svg>
<span style="left:91.00px;top:401.56px;font-size:12px;line-height:12px;color:#111;letter-spacing:0.052px;">Definitions</span>
<svg style="left:55px;top:421px;" width="7" height="10" viewBox="-0.800 -0.100 7.000 10.000"><path d="M1 0.900l3.600 3.600L1 8.100" stroke="#666" stroke-width="1.200" fill="none"/></svg>
<svg style="left:69px;top:417px;" width="17" height="17" viewBox="-0.300 -0.600 17.000 17.000"><rect x="0.600" y="0.600" width="14.800" height="14.800" fill="#fff" stroke="#5a9a4a" stroke-width="1.100"/><path d="M2.800 13.400Q5.600 8 8.400 2.600Q11.400 7.400 13.400 12.600" fill="none" stroke="#d9593a" stroke-width="1.100"/><path d="M2.400 3.400Q6 12 12.400 7.400" fill="none" stroke="#d9593a" stroke-width="1.100"/></svg>
<span style="left:91.00px;top:419.56px;font-size:12px;line-height:12px;color:#111;letter-spacing:-0.310px;">Geometry 1</span>
<svg style="left:55px;top:439px;" width="7" height="10" viewBox="-0.800 -0.100 7.000 10.000"><path d="M1 0.900l3.600 3.600L1 8.100" stroke="#666" stroke-width="1.200" fill="none"/></svg>
<svg style="left:69px;top:436px;" width="16" height="16" viewBox="-0.800 -0.100 16.000 16.000"><rect x="0.6" y="4.2" width="3.700" height="3.700" rx="0.500" fill="#f7ab2e"/><rect x="0.6" y="8.8" width="3.700" height="3.700" rx="0.500" fill="#ee9a2e"/><rect x="5.8" y="1.1" width="3.700" height="3.700" rx="0.500" fill="#f0a63a"/><rect x="5.8" y="6.1" width="3.700" height="3.700" rx="0.500" fill="#f29a26"/><rect x="5.8" y="11.1" width="3.700" height="3.700" rx="0.500" fill="#d98a2e"/><rect x="11" y="4.2" width="3.700" height="3.700" rx="0.500" fill="#f2972a"/><rect x="11" y="8.8" width="3.700" height="3.700" rx="0.500" fill="#e08a2c"/></svg>
<span style="left:91.00px;top:437.56px;font-size:12px;line-height:12px;color:#111;letter-spacing:-0.121px;">Materials</span>
<svg style="left:54px;top:458px;" width="9" height="7" viewBox="0.000 -0.900 9.000 7.000"><path d="M0.900 1l3.600 3.600L8.100 1" stroke="#1a1a1a" stroke-width="1.350" fill="none"/></svg>
<svg style="left:69px;top:454px;" width="17" height="15" viewBox="-0.300 -0.600 17.000 15.000"><rect x="4.6" y="0.8" width="6.8" height="2.4" fill="#dbe8f4" stroke="#5b8fc4" stroke-width="0.9"/><rect x="0.6" y="3.2" width="14.8" height="5.4" fill="#c9dcef" stroke="#5b8fc4" stroke-width="1"/><path d="M0.8 5.9h14.4" stroke="#5b8fc4" stroke-width="0.9"/><rect x="4.6" y="8.6" width="6.8" height="2.4" fill="#dbe8f4" stroke="#5b8fc4" stroke-width="0.9"/><rect x="6.2" y="11" width="3.6" height="2.2" fill="#dbe8f4" stroke="#5b8fc4" stroke-width="0.9"/></svg>
<span style="left:91.00px;top:455.56px;font-size:12px;line-height:12px;color:#111;letter-spacing:-0.118px;">Solid Mechanics</span>
<svg style="left:89px;top:472px;" width="17" height="16" viewBox="-0.300 -0.100 17.000 16.000"><path d="M3 2.5H13a3 3 0 0 1 3 3V10.5a3 3 0 0 1-3 3H3a2.6 5.5 0 0 1 0-11z" fill="#2e7fc2"/><path d="M3.2 6.6H16" stroke="#fff" stroke-width="0.9"/><path d="M3.200 3a1.700 5 0 0 1 0 10" fill="none" stroke="#fff" stroke-width="0.800"/><rect x="0" y="0" width="6.4" height="6.6" fill="#ffffff"/><text x="0.2" y="6" font-family="Liberation Sans" font-size="7.5" font-weight="700" fill="#222">D</text></svg>
<span style="left:111.00px;top:473.56px;font-size:12px;line-height:12px;color:#111;letter-spacing:-0.246px;">Linear Elastic Material 1</span>
<svg style="left:89px;top:490px;" width="17" height="16" viewBox="-0.300 -0.100 17.000 16.000"><path d="M3 2.5H13a3 3 0 0 1 3 3V10.5a3 3 0 0 1-3 3H3a2.6 5.5 0 0 1 0-11z" fill="#e9e9e9" stroke="#a4a4a4" stroke-width="0.9"/><path d="M3.4 7.4H15.6V10.500a2.600 2.600 0 0 1-2.600 2.600H3.2a2 3 0 0 0 0.200-5.700z" fill="#2e7fc2"/><path d="M3.200 3a1.700 5 0 0 1 0 10" fill="none" stroke="#c8c8c8" stroke-width="0.800"/><rect x="0" y="0" width="6.4" height="6.6" fill="#ffffff"/><text x="0.2" y="6" font-family="Liberation Sans" font-size="7.5" font-weight="700" fill="#222">D</text></svg>
<span style="left:111.00px;top:491.56px;font-size:12px;line-height:12px;color:#111;letter-spacing:-0.848px;">Free 1</span>
<svg style="left:89px;top:508px;" width="17" height="16" viewBox="-0.300 -0.100 17.000 16.000"><path d="M3 2.5H13a3 3 0 0 1 3 3V10.5a3 3 0 0 1-3 3H3a2.6 5.5 0 0 1 0-11z" fill="#2e7fc2"/><path d="M3.2 6.6H16" stroke="#fff" stroke-width="0.9"/><path d="M3.200 3a1.700 5 0 0 1 0 10" fill="none" stroke="#fff" stroke-width="0.800"/><rect x="0" y="0" width="6.4" height="6.6" fill="#ffffff"/><text x="0.2" y="6" font-family="Liberation Sans" font-size="7.5" font-weight="700" fill="#222">D</text></svg>
<span style="left:111.00px;top:509.56px;font-size:12px;line-height:12px;color:#111;letter-spacing:-0.266px;">Initial Values 1</span>
<svg style="left:74px;top:530px;" width="9" height="7" viewBox="0.000 -0.900 9.000 7.000"><path d="M0.900 1l3.600 3.600L8.100 1" stroke="#1a1a1a" stroke-width="1.350" fill="none"/></svg>
<svg style="left:89px;top:526px;" width="17" height="16" viewBox="-0.300 -0.100 17.000 16.000"><path d="M3 2.5H13a3 3 0 0 1 3 3V10.5a3 3 0 0 1-3 3H3a2.6 5.5 0 0 1 0-11z" fill="#2e7fc2"/><path d="M3.2 6.6H16" stroke="#fff" stroke-width="0.9"/><path d="M3.200 3a1.700 5 0 0 1 0 10" fill="none" stroke="#fff" stroke-width="0.800"/></svg>
<span style="left:111.00px;top:527.56px;font-size:12px;line-height:12px;color:#111;letter-spacing:-0.219px;">Linear Elastic Material 2</span>
<div style="left:9px;top:543px;width:348px;height:17.5px;background:#c5e1f8;"></div>
<svg style="left:109px;top:544px;" width="17" height="16" viewBox="-0.300 -0.100 17.000 16.000"><path d="M2.800 2.600H8.600V7.400H16V11.400a2.600 2.600 0 0 1-2.600 2.600H2.800a2.600 5.700 0 0 1 0-11.400z" fill="#2e7fc2"/><path d="M3.200 7.600H8.600" stroke="#cfe6f8" stroke-width="0.800"/><path d="M3 3a1.700 5.300 0 0 1 0 10.600" fill="none" stroke="#cfe6f8" stroke-width="0.800"/><path d="M12.800 0v6.800M9.850 1.700l5.900 3.400M15.750 1.700l-5.900 3.400" stroke="#7d7d7d" stroke-width="1.250"/></svg>
<span style="left:131.00px;top:545.56px;font-size:12px;line-height:12px;color:#111;letter-spacing:-0.186px;">Viscoelasticity 1</span>
<svg style="left:109px;top:562px;" width="17" height="16" viewBox="-0.300 -0.100 17.000 16.000"><path d="M2.800 2.600H8.600V7.400H16V11.400a2.600 2.600 0 0 1-2.600 2.600H2.800a2.600 5.700 0 0 1 0-11.400z" fill="#2e7fc2"/><path d="M3.200 7.600H8.600" stroke="#cfe6f8" stroke-width="0.800"/><path d="M3 3a1.700 5.300 0 0 1 0 10.600" fill="none" stroke="#cfe6f8" stroke-width="0.800"/><path d="M12.800 0v6.800M9.850 1.700l5.900 3.400M15.750 1.700l-5.900 3.400" stroke="#7d7d7d" stroke-width="1.250"/><circle cx="3.800" cy="8.200" r="2.800" fill="#e4572b" stroke="#fff" stroke-width="0.900"/></svg>
<span style="left:131.00px;top:563.56px;font-size:12px;line-height:12px;color:#111;letter-spacing:-0.144px;">Viscoelasticity 2</span>
<svg style="left:89px;top:580px;" width="17" height="16" viewBox="-0.300 -0.100 17.000 16.000"><path d="M3 2.5H13a3 3 0 0 1 3 3V10.5a3 3 0 0 1-3 3H3a2.6 5.5 0 0 1 0-11z" fill="#e9e9e9" stroke="#a4a4a4" stroke-width="0.9"/><path d="M3.4 7.4H15.6V10.500a2.600 2.600 0 0 1-2.600 2.600H3.2a2 3 0 0 0 0.200-5.700z" fill="#2e7fc2"/><path d="M3.200 3a1.700 5 0 0 1 0 10" fill="none" stroke="#c8c8c8" stroke-width="0.800"/></svg>
<span style="left:111.00px;top:581.56px;font-size:12px;line-height:12px;color:#111;letter-spacing:-0.199px;">Fixed Constraint 1</span>
<svg style="left:89px;top:598px;" width="17" height="16" viewBox="-0.300 -0.100 17.000 16.000"><path d="M3 2.5H13a3 3 0 0 1 3 3V10.5a3 3 0 0 1-3 3H3a2.6 5.5 0 0 1 0-11z" fill="#e9e9e9" stroke="#a4a4a4" stroke-width="0.9"/><path d="M3.4 7.4H15.6V10.500a2.600 2.600 0 0 1-2.600 2.600H3.2a2 3 0 0 0 0.200-5.700z" fill="#2e7fc2"/><path d="M3.200 3a1.700 5 0 0 1 0 10" fill="none" stroke="#c8c8c8" stroke-width="0.800"/></svg>
<span style="left:111.00px;top:599.56px;font-size:12px;line-height:12px;color:#111;letter-spacing:-0.224px;">Prescribed Displacement 1</span>
<svg style="left:89px;top:616px;" width="17" height="16" viewBox="-0.300 -0.100 17.000 16.000"><path d="M3 2.5H13a3 3 0 0 1 3 3V10.5a3 3 0 0 1-3 3H3a2.6 5.5 0 0 1 0-11z" fill="#e9e9e9" stroke="#a4a4a4" stroke-width="0.9"/><path d="M3.4 7.4H15.6V10.500a2.600 2.600 0 0 1-2.600 2.600H3.2a2 3 0 0 0 0.200-5.700z" fill="#2e7fc2"/><path d="M3.200 3a1.700 5 0 0 1 0 10" fill="none" stroke="#c8c8c8" stroke-width="0.800"/></svg>
<span style="left:111.00px;top:617.56px;font-size:12px;line-height:12px;color:#111;letter-spacing:-0.196px;">Prescribed Displacement 2</span>
<svg style="left:55px;top:637px;" width="7" height="10" viewBox="-0.800 -0.100 7.000 10.000"><path d="M1 0.900l3.600 3.600L1 8.100" stroke="#666" stroke-width="1.200" fill="none"/></svg>
<svg style="left:69px;top:634px;" width="17" height="15" viewBox="-0.300 -0.600 17.000 15.000"><path d="M8 0.8l7.2 12.4H0.8z" fill="#e4e4e4" stroke="#7a7a7a" stroke-width="1"/><path d="M4.4 7h7.2M2.6 10.1h10.8M8 0.8L4.4 13.2M8 0.8l3.6 12.4M4.4 7l3.6 6.2 3.6-6.2M6.2 3.9h3.6M6.2 3.9l3.6 6.2M9.8 3.9l-3.6 6.2" stroke="#8a8a8a" stroke-width="0.7" fill="none"/></svg>
<span style="left:91.00px;top:635.56px;font-size:12px;line-height:12px;color:#111;letter-spacing:-0.493px;">Mesh 1</span>
<svg style="left:35px;top:655px;" width="7" height="10" viewBox="-0.800 -0.100 7.000 10.000"><path d="M1 0.900l3.600 3.600L1 8.100" stroke="#666" stroke-width="1.200" fill="none"/></svg>
<svg style="left:48px;top:654px;" width="19" height="11" viewBox="-0.300 -0.600 19.000 11.000"><g fill="none" stroke="#2a9bb4" stroke-width="1.050" stroke-linecap="round"><path d="M0.500 4.600C0.500 2.400 1.600 1.200 2.600 2L6.200 5"/><circle cx="8.800" cy="5.900" r="2.600"/><circle cx="15" cy="5.900" r="2.600"/><path d="M11.400 5.600H12.400"/><path d="M10.800 2.800C10.800 1.200 11.400 0.400 12.400 0.700L16.200 3C17.100 3.700 17.500 4.700 17.500 5.600"/></g></svg>
<span style="left:71.00px;top:653.56px;font-size:12px;line-height:12px;color:#111;letter-spacing:-0.472px;">Study 1</span>
<svg style="left:35px;top:673px;" width="7" height="10" viewBox="-0.800 -0.100 7.000 10.000"><path d="M1 0.900l3.600 3.600L1 8.100" stroke="#666" stroke-width="1.200" fill="none"/></svg>
<svg style="left:48px;top:672px;" width="19" height="11" viewBox="-0.300 -0.600 19.000 11.000"><g fill="none" stroke="#2a9bb4" stroke-width="1.050" stroke-linecap="round"><path d="M0.500 4.600C0.500 2.400 1.600 1.200 2.600 2L6.200 5"/><circle cx="8.800" cy="5.900" r="2.600"/><circle cx="15" cy="5.900" r="2.600"/><path d="M11.400 5.600H12.400"/><path d="M10.800 2.800C10.800 1.200 11.400 0.400 12.400 0.700L16.200 3C17.100 3.700 17.500 4.700 17.500 5.600"/></g></svg>
<span style="left:71.00px;top:671.56px;font-size:12px;line-height:12px;color:#111;letter-spacing:-0.372px;">Study 2</span>
<svg style="left:35px;top:691px;" width="7" height="10" viewBox="-0.800 -0.100 7.000 10.000"><path d="M1 0.900l3.600 3.600L1 8.100" stroke="#666" stroke-width="1.200" fill="none"/></svg>
<svg style="left:48px;top:690px;" width="19" height="11" viewBox="-0.300 -0.600 19.000 11.000"><g fill="none" stroke="#2a9bb4" stroke-width="1.050" stroke-linecap="round"><path d="M0.500 4.600C0.500 2.400 1.600 1.200 2.600 2L6.200 5"/><circle cx="8.800" cy="5.900" r="2.600"/><circle cx="15" cy="5.900" r="2.600"/><path d="M11.400 5.600H12.400"/><path d="M10.800 2.800C10.800 1.200 11.400 0.400 12.400 0.700L16.200 3C17.100 3.700 17.500 4.700 17.500 5.600"/></g></svg>
<span style="left:71.00px;top:689.56px;font-size:12px;line-height:12px;color:#111;letter-spacing:-0.372px;">Study 3</span>
<svg style="left:35px;top:709px;" width="7" height="10" viewBox="-0.800 -0.100 7.000 10.000"><path d="M1 0.900l3.600 3.600L1 8.100" stroke="#666" stroke-width="1.200" fill="none"/></svg>
<svg style="left:48px;top:705px;" width="18" height="17" viewBox="-0.800 -0.600 18.000 17.000"><path d="M0.300 7.400V11.400L5.800 15.600V11.600z" fill="#808285"/><rect x="2" y="0.600" width="8.800" height="9.600" fill="#fff" stroke="#7c7c7e" stroke-width="0.900"/><rect x="3.200" y="1.800" width="6.400" height="5" fill="#b84fa3"/><rect x="4.400" y="2.400" width="8.800" height="9.400" fill="#fff" stroke="#7c7c7e" stroke-width="0.900"/><rect x="5.600" y="3.600" width="6.400" height="5" fill="#b84fa3"/><rect x="6.800" y="4.200" width="8.800" height="7.600" fill="#fff" stroke="#7c7c7e" stroke-width="0.900"/><rect x="8" y="5.400" width="6.400" height="4.600" fill="#b84fa3"/><rect x="5.800" y="11.800" width="10.600" height="3.800" fill="#fff" stroke="#7c7c7e" stroke-width="0.900"/></svg>
<span style="left:71.00px;top:707.56px;font-size:12px;line-height:12px;color:#111;letter-spacing:-0.545px;">Results</span>
<div style="left:370px;top:170.5px;width:425px;height:1109.5px;background:#fafbfd;border-radius:4px 4px 0 0;"></div>
<span style="left:376.20px;top:179.86px;font-size:22px;line-height:22px;color:#2f5a9b;letter-spacing:-0.713px;-webkit-text-stroke:0.22px #fafbfd;">Settings</span>
<svg style="left:754px;top:183px;" width="40" height="13" viewBox="0.000 0.000 40.000 13.000"><path d="M1 3.800h8l-4 4.200z" fill="#bcc3cc"/><rect x="15.600" y="2.400" width="7.800" height="6.900" fill="none" stroke="#bcc3cc" stroke-width="1"/><path d="M15.100 2.900h8.800" stroke="#bcc3cc" stroke-width="2"/><path d="M32 1.800h5v6h-5zM31 7.800h7v1h-7zM34 8.800h1v3.400h-1z" fill="#bcc3cc"/></svg>
<span style="left:376.00px;top:206.74px;font-size:13px;line-height:13px;color:#3a6aa8;letter-spacing:-0.094px;">Viscoelasticity</span>
<span style="left:375.00px;top:240.56px;font-size:12px;line-height:12px;color:#111;letter-spacing:-0.284px;">Label:</span>
<div style="left:416px;top:238px;width:346px;height:17.5px;background:#fff;border:1px solid #cfcfcf;box-sizing:border-box;"></div>
<span style="left:419.30px;top:240.56px;font-size:12px;line-height:12px;color:#111;letter-spacing:-0.186px;">Viscoelasticity 1</span>
<div style="left:770px;top:236.2px;width:20px;height:21.5px;border:1px solid #d9d9d9;box-sizing:border-box;border-radius:2.5px;background:linear-gradient(#f5f5f5,#e8e8e8);"></div>
<svg style="left:772px;top:238px;" width="16" height="18" viewBox="0.000 -0.500 16.000 18.000"><rect x="1.800" y="1.100" width="12.600" height="12.600" rx="1.400" fill="#fff" stroke="#707070" stroke-width="1.100"/><rect x="2.400" y="1.700" width="11.400" height="2.400" fill="#d6d6d6"/><path d="M1.800 4.500h12.600" stroke="#707070" stroke-width="1"/><path d="M4.200 7h7.800M4.200 9h7.800" stroke="#2d8f7b" stroke-width="1"/><rect x="0" y="10.400" width="4.800" height="6" fill="#ededed"/><path d="M0.600 15.800L3.600 12" stroke="#2d9a82" stroke-width="1.800"/><path d="M0.800 10.800H4.600V14.600z" fill="#2d9a82"/></svg>
<div style="left:370px;top:267px;width:425px;height:1px;background:#dadbde;"></div>
<svg style="left:376px;top:276px;" width="8" height="11" viewBox="-0.700 -0.900 8.000 11.000"><path d="M1.3 1l3.8 4-3.8 4" stroke="#222" stroke-width="1.4" fill="none"/></svg>
<span style="left:396.50px;top:274.94px;font-size:13px;line-height:13px;color:#2e5c9e;letter-spacing:0.132px;">Domain Selection</span>
<div style="left:370px;top:296px;width:425px;height:1px;background:#dadbde;"></div>
<svg style="left:376px;top:305px;" width="8" height="11" viewBox="-0.700 -0.900 8.000 11.000"><path d="M1.3 1l3.8 4-3.8 4" stroke="#222" stroke-width="1.4" fill="none"/></svg>
<span style="left:396.50px;top:303.94px;font-size:13px;line-height:13px;color:#2e5c9e;letter-spacing:0.426px;">Override and Contribution</span>
<div style="left:370px;top:325px;width:425px;height:1px;background:#dadbde;"></div>
<svg style="left:376px;top:334px;" width="8" height="11" viewBox="-0.700 -0.900 8.000 11.000"><path d="M1.3 1l3.8 4-3.8 4" stroke="#222" stroke-width="1.4" fill="none"/></svg>
<span style="left:396.50px;top:332.94px;font-size:13px;line-height:13px;color:#2e5c9e;letter-spacing:0.271px;">Equation</span>
<div style="left:370px;top:354px;width:425px;height:1px;background:#dadbde;"></div>
<svg style="left:376px;top:363px;" width="8" height="11" viewBox="-0.700 -0.900 8.000 11.000"><path d="M1.3 1l3.8 4-3.8 4" stroke="#222" stroke-width="1.4" fill="none"/></svg>
<span style="left:396.50px;top:361.94px;font-size:13px;line-height:13px;color:#2e5c9e;letter-spacing:0.597px;">Model Input</span>
<div style="left:370px;top:383px;width:425px;height:1px;background:#dadbde;"></div>
<svg style="left:376px;top:392px;" width="8" height="11" viewBox="-0.700 -0.900 8.000 11.000"><path d="M1.3 1l3.8 4-3.8 4" stroke="#222" stroke-width="1.4" fill="none"/></svg>
<span style="left:396.50px;top:390.94px;font-size:13px;line-height:13px;color:#2e5c9e;letter-spacing:-0.042px;">Sketch</span>
<div style="left:370px;top:412px;width:425px;height:1px;background:#dadbde;"></div>
<svg style="left:375px;top:423px;" width="11" height="8" viewBox="-0.200 -0.400 11.000 8.000"><path d="M1 1.3l4 3.8 4-3.8" stroke="#2e6fb5" stroke-width="1.4" fill="none"/></svg>
<span style="left:396.50px;top:419.94px;font-size:13px;line-height:13px;color:#2e5c9e;letter-spacing:0.228px;">Viscoelasticity Model</span>
<svg style="left:773px;top:360px;" width="17" height="17" viewBox="0.000 -0.500 17.000 17.000"><path d="M1.100 2.600h12.600v12.700H1.100zM1.100 5.800h12.600M1.100 9h12.600M1.100 12.100h12.600M5.300 2.600v12.700M9.500 2.600v12.700" fill="#fff" stroke="#b6b6b8" stroke-width="1"/><path d="M13.400 -0.500L16.800 2.800 8.700 11.200 5.300 7.800z" fill="#4a86c0"/><path d="M5.300 7.800L8.700 11.200 3.200 13z" fill="#a9c8e6"/><path d="M4.200 10.600L5.900 12.200 3.200 13z" fill="#2f5f96"/></svg>
<span style="left:375.00px;top:449.76px;font-size:12px;line-height:12px;color:#111;letter-spacing:0.031px;">Material model:</span>
<div style="left:375px;top:469.2px;width:415px;height:20.5px;border:1px solid #d2d2d2;box-sizing:border-box;border-radius:2px;background:linear-gradient(#f3f3f3,#e9e9e9);"></div>
<span style="left:388.00px;top:474.16px;font-size:12px;line-height:12px;color:#111;letter-spacing:-0.171px;">User defined</span>
<svg style="left:775px;top:477px;" width="9" height="6" viewBox="-0.500 -0.200 9.000 6.000"><path d="M0 0h7.4l-3.7 4.4z" fill="#111"/></svg>
<span style="left:375.00px;top:497.96px;font-size:12px;line-height:12px;color:#111;letter-spacing:-0.222px;">Viscoelastic strains:</span>
<div style="left:375px;top:517.3px;width:415px;height:20.5px;border:1px solid #d2d2d2;box-sizing:border-box;border-radius:2px;background:linear-gradient(#f3f3f3,#e9e9e9);"></div>
<span style="left:388.00px;top:522.26px;font-size:12px;line-height:12px;color:#111;letter-spacing:-0.086px;">Deviatoric</span>
<svg style="left:775px;top:525px;" width="9" height="6" viewBox="-0.500 -0.300 9.000 6.000"><path d="M0 0h7.4l-3.7 4.4z" fill="#111"/></svg>
<span style="left:375.00px;top:545.96px;font-size:12px;line-height:12px;color:#111;letter-spacing:-0.273px;">Specify:</span>
<div style="left:375px;top:565.3px;width:415px;height:20.5px;border:1px solid #d2d2d2;box-sizing:border-box;border-radius:2px;background:linear-gradient(#f3f3f3,#e9e9e9);"></div>
<span style="left:388.00px;top:570.26px;font-size:12px;line-height:12px;color:#111;letter-spacing:-0.076px;">Storage and loss moduli</span>
<svg style="left:775px;top:573px;" width="9" height="6" viewBox="-0.500 -0.300 9.000 6.000"><path d="M0 0h7.4l-3.7 4.4z" fill="#111"/></svg>
<span style="left:375.00px;top:593.76px;font-size:12px;line-height:12px;color:#111;letter-spacing:-0.017px;">Shear storage modulus, contribution:</span>
<span style="left:376.50px;top:616.00px;font-size:13px;line-height:13px;color:#111;font-style:italic;">G</span>
<span style="left:385.50px;top:614.11px;font-size:17px;line-height:17px;color:#111;">′</span>
<div style="left:404px;top:613.5px;width:363px;height:17px;background:#fff;border:1px solid #cfcfcf;box-sizing:border-box;"></div>
<span style="left:407.30px;top:615.86px;font-size:12px;line-height:12px;color:#111;letter-spacing:0.007px;">gstor(solid.freq)</span>
<span style="left:777.00px;top:616.46px;font-size:12px;line-height:12px;color:#111;letter-spacing:-0.994px;">Pa</span>
<span style="left:375.00px;top:638.76px;font-size:12px;line-height:12px;color:#111;letter-spacing:-0.028px;">Shear loss modulus, contribution:</span>
<span style="left:376.50px;top:661.00px;font-size:13px;line-height:13px;color:#111;font-style:italic;">G</span>
<span style="left:385.50px;top:659.11px;font-size:17px;line-height:17px;color:#111;">″</span>
<div style="left:404px;top:658.5px;width:363px;height:17px;background:#fff;border:1px solid #cfcfcf;box-sizing:border-box;"></div>
<span style="left:407.30px;top:660.86px;font-size:12px;line-height:12px;color:#111;letter-spacing:-0.071px;">gloss(solid.freq)</span>
<span style="left:777.00px;top:661.46px;font-size:12px;line-height:12px;color:#111;letter-spacing:-0.994px;">Pa</span>
<div style="left:376px;top:683px;width:13.5px;height:13px;background:#f4f4f4;border:1px solid #8a8a8a;box-sizing:border-box;border-radius:1px;"></div>
<span style="left:395.00px;top:682.96px;font-size:12px;line-height:12px;color:#111;letter-spacing:0.120px;">Low frequency limit</span>
<div style="left:370px;top:708px;width:425px;height:1px;background:#dadbde;"></div>
<svg style="left:375px;top:719px;" width="11" height="8" viewBox="-0.200 -0.400 11.000 8.000"><path d="M1 1.3l4 3.8 4-3.8" stroke="#2e6fb5" stroke-width="1.4" fill="none"/></svg>
<span style="left:396.50px;top:715.94px;font-size:13px;line-height:13px;color:#2e5c9e;letter-spacing:0.241px;">Time Domain and Eigenfrequency</span>
<svg style="left:716px;top:714px;" width="17" height="16" viewBox="-0.600 0.000 17.000 16.000"><path d="M2.300 1.200v13.200h13" stroke="#808080" stroke-width="1.100" fill="none"/><path d="M0.800 2.800l1.500-1.900 1.500 1.900M13.800 12.900l1.900 1.500-1.900 1.500" stroke="#808080" stroke-width="1" fill="none"/><path d="M2.600 8.400q1.800-5.200 4.600-2.400t4.400 3.600 3.600-2.400" stroke="#a8579c" stroke-width="1.100" fill="none"/></svg>
<svg style="left:737px;top:719px;" width="9" height="6" viewBox="-0.300 -0.800 9.000 6.000"><path d="M0.3 0.3h7.4l-3.7 4.2z" fill="#111"/></svg>
<svg style="left:758px;top:715px;" width="14" height="14" viewBox="-0.600 -0.500 14.000 14.000"><path d="M0.400 0.400H11.600L12.600 1.600V12.600H1.600L0.400 11.400z" fill="#2a78ba"/><rect x="1.600" y="1.600" width="11" height="11" fill="#2e86cc"/><path d="M1.600 1.600H12.600M1.600 1.600V12.600M7.100 1.600V12.600M1.600 7.100H12.600M0.400 0.400L1.600 1.600" stroke="#a9d7f7" stroke-width="0.900" fill="none"/></svg>
<svg style="left:777px;top:719px;" width="9" height="6" viewBox="-0.300 -0.800 9.000 6.000"><path d="M0.3 0.3h7.4l-3.7 4.2z" fill="#111"/></svg>
<span style="left:376.30px;top:752.77px;font-size:13.5px;line-height:13.5px;color:#1a1a1a;letter-spacing:-0.016px;">10</span>
<span style="left:391.80px;top:746.51px;font-size:10.5px;line-height:10.5px;color:#1a1a1a;transform:scaleX(1.1725);transform-origin:0 0;">−</span>
<span style="left:400.40px;top:746.96px;font-size:9.5px;line-height:9.5px;color:#1a1a1a;font-style:italic;">n</span>
<span style="left:406.40px;top:751.26px;font-size:9.5px;line-height:9.5px;color:#1a1a1a;">d</span>
<div style="left:400.7px;top:761.5px;width:10.699999999999989px;height:0;border-top:1px dotted #333;"></div>
<span style="left:412.00px;top:745.97px;font-size:13.5px;line-height:13.5px;color:#1a1a1a;">/</span>
<span style="left:417.20px;top:746.96px;font-size:9.5px;line-height:9.5px;color:#1a1a1a;">2</span>
<span style="left:426.00px;top:751.90px;font-size:15px;line-height:15px;color:#1a1a1a;transform:scaleX(1.0724);transform-origin:0 0;">&lt;</span>
<span style="left:441.30px;top:751.93px;font-size:14.5px;line-height:14.5px;color:#1a1a1a;font-style:italic;transform:scaleX(1.1411);transform-origin:0 0;">f</span>
<span style="left:447.20px;top:751.90px;font-size:15px;line-height:15px;color:#1a1a1a;transform:scaleX(1.1026);transform-origin:0 0;">/</span>
<span style="left:453.30px;top:751.93px;font-size:14.5px;line-height:14.5px;color:#1a1a1a;font-style:italic;transform:scaleX(1.1411);transform-origin:0 0;">f</span>
<span style="left:458.40px;top:759.66px;font-size:9.5px;line-height:9.5px;color:#1a1a1a;">c</span>
<div style="left:452.3px;top:769.5px;width:13.699999999999989px;height:0;border-top:1px dotted #333;"></div>
<span style="left:471.20px;top:751.90px;font-size:15px;line-height:15px;color:#1a1a1a;transform:scaleX(1.0724);transform-origin:0 0;">&lt;</span>
<span style="left:484.00px;top:752.77px;font-size:13.5px;line-height:13.5px;color:#1a1a1a;letter-spacing:-0.516px;">10</span>
<span style="left:500.40px;top:746.96px;font-size:9.5px;line-height:9.5px;color:#1a1a1a;font-style:italic;">n</span>
<span style="left:506.40px;top:751.26px;font-size:9.5px;line-height:9.5px;color:#1a1a1a;">d</span>
<div style="left:500.7px;top:761.5px;width:10.699999999999989px;height:0;border-top:1px dotted #333;"></div>
<span style="left:512.00px;top:745.97px;font-size:13.5px;line-height:13.5px;color:#1a1a1a;">/</span>
<span style="left:517.20px;top:746.96px;font-size:9.5px;line-height:9.5px;color:#1a1a1a;">2</span>
<span style="left:375.00px;top:780.96px;font-size:12px;line-height:12px;color:#111;letter-spacing:-0.223px;">Frequency range:</span>
<div style="left:375px;top:800.4px;width:415px;height:20.5px;border:1px solid #d2d2d2;box-sizing:border-box;border-radius:2px;background:linear-gradient(#f3f3f3,#e9e9e9);"></div>
<span style="left:388.00px;top:805.36px;font-size:12px;line-height:12px;color:#111;letter-spacing:-0.005px;">Bandwidth and center</span>
<svg style="left:775px;top:808px;" width="9" height="6" viewBox="-0.500 -0.400 9.000 6.000"><path d="M0 0h7.4l-3.7 4.4z" fill="#111"/></svg>
<span style="left:375.00px;top:829.16px;font-size:12px;line-height:12px;color:#111;letter-spacing:-0.111px;">Center frequency:</span>
<span style="left:377.00px;top:849.50px;font-size:13px;line-height:13px;color:#111;font-style:italic;">f</span>
<span style="left:383.00px;top:855.88px;font-size:9px;line-height:9px;color:#111;">c</span>
<div style="left:401px;top:848.3px;width:365px;height:17px;background:#fff;border:1px solid #cfcfcf;box-sizing:border-box;"></div>
<span style="left:404.30px;top:850.66px;font-size:12px;line-height:12px;color:#111;letter-spacing:0.128px;">1/(2*pi*1[ms])</span>
<span style="left:776.00px;top:851.16px;font-size:12px;line-height:12px;color:#111;letter-spacing:-0.186px;">Hz</span>
<span style="left:375.00px;top:873.96px;font-size:12px;line-height:12px;color:#111;letter-spacing:-0.129px;">Bandwidth (decades):</span>
<span style="left:376.50px;top:893.50px;font-size:13px;line-height:13px;color:#111;font-style:italic;">n</span>
<span style="left:383.80px;top:899.88px;font-size:9px;line-height:9px;color:#111;">d</span>
<div style="left:401px;top:893.4px;width:365px;height:17px;background:#fff;border:1px solid #cfcfcf;box-sizing:border-box;"></div>
<span style="left:404.30px;top:895.76px;font-size:12px;line-height:12px;color:#111;">2</span>
<span style="left:778.20px;top:895.76px;font-size:12px;line-height:12px;color:#111;">1</span>
<span style="left:375.00px;top:918.96px;font-size:12px;line-height:12px;color:#111;letter-spacing:-0.132px;">Accuracy:</span>
<div style="left:375px;top:938.3px;width:415px;height:20.5px;border:1px solid #d2d2d2;box-sizing:border-box;border-radius:2px;background:linear-gradient(#f3f3f3,#e9e9e9);"></div>
<span style="left:388.00px;top:943.26px;font-size:12px;line-height:12px;color:#111;letter-spacing:0.221px;">Normal</span>
<svg style="left:775px;top:946px;" width="9" height="6" viewBox="-0.500 -0.300 9.000 6.000"><path d="M0 0h7.4l-3.7 4.4z" fill="#111"/></svg>
<span style="left:377.00px;top:977.30px;font-size:13px;line-height:13px;color:#1a1a1a;font-style:italic;transform:scaleX(0.8099);transform-origin:0 0;">G</span>
<span style="left:385.40px;top:983.06px;font-size:9.5px;line-height:9.5px;color:#1a1a1a;transform:scaleX(1.0950);transform-origin:0 0;">q</span>
<span style="left:392.40px;top:976.53px;font-size:14.5px;line-height:14.5px;color:#1a1a1a;">(</span>
<span style="left:397.00px;top:976.87px;font-size:13.5px;line-height:13.5px;color:#1a1a1a;font-style:italic;transform:scaleX(1.0461);transform-origin:0 0;">ω</span>
<span style="left:408.80px;top:976.53px;font-size:14.5px;line-height:14.5px;color:#1a1a1a;">)</span>
<span style="left:417.60px;top:975.56px;font-size:16px;line-height:16px;color:#1a1a1a;transform:scaleX(1.2071);transform-origin:0 0;">≈</span>
<span style="left:432.40px;top:976.87px;font-size:13.5px;line-height:13.5px;color:#1a1a1a;transform:scaleX(1.0630);transform-origin:0 0;">Δ</span>
<span style="left:442.30px;top:977.30px;font-size:13px;line-height:13px;color:#1a1a1a;font-style:italic;transform:scaleX(0.9284);transform-origin:0 0;">G</span>
<span style="left:455.30px;top:975.56px;font-size:16px;line-height:16px;color:#1a1a1a;transform:scaleX(1.1130);transform-origin:0 0;">+</span>
<span style="left:470.40px;top:965.92px;font-size:34px;line-height:34px;color:#1a1a1a;transform:scaleX(0.8273);transform-origin:0 0;">Σ</span>
<span style="left:475.40px;top:998.36px;font-size:9.5px;line-height:9.5px;color:#1a1a1a;font-style:italic;transform:scaleX(0.9594);transform-origin:0 0;">m</span>
<div style="left:491.2px;top:982.8px;width:60.3px;height:1px;background:#222;"></div>
<span style="left:504.00px;top:964.43px;font-size:14.5px;line-height:14.5px;color:#1a1a1a;font-style:italic;transform:scaleX(1.1516);transform-origin:0 0;">iωτ</span>
<span style="left:527.00px;top:972.36px;font-size:9.5px;line-height:9.5px;color:#1a1a1a;letter-spacing:-0.136px;">vm</span>
<span style="left:492.00px;top:985.57px;font-size:13.5px;line-height:13.5px;color:#1a1a1a;">1</span>
<span style="left:501.60px;top:984.06px;font-size:16px;line-height:16px;color:#1a1a1a;transform:scaleX(1.1344);transform-origin:0 0;">+</span>
<span style="left:515.80px;top:984.73px;font-size:14.5px;line-height:14.5px;color:#1a1a1a;font-style:italic;transform:scaleX(1.1516);transform-origin:0 0;">iωτ</span>
<span style="left:538.30px;top:992.96px;font-size:9.5px;line-height:9.5px;color:#1a1a1a;letter-spacing:0.114px;">vm</span>
<span style="left:554.50px;top:977.30px;font-size:13px;line-height:13px;color:#1a1a1a;font-style:italic;transform:scaleX(0.8494);transform-origin:0 0;">G</span>
<span style="left:563.60px;top:983.26px;font-size:9.5px;line-height:9.5px;color:#1a1a1a;letter-spacing:0.014px;">vm</span>
<span style="left:578.80px;top:976.87px;font-size:13.5px;line-height:13.5px;color:#1a1a1a;">,</span>
<span style="left:596.30px;top:976.87px;font-size:13.5px;line-height:13.5px;color:#1a1a1a;font-style:italic;transform:scaleX(0.9510);transform-origin:0 0;">ω</span>
<span style="left:611.00px;top:975.36px;font-size:16px;line-height:16px;color:#1a1a1a;transform:scaleX(1.0916);transform-origin:0 0;">=</span>
<span style="left:624.50px;top:976.87px;font-size:13.5px;line-height:13.5px;color:#1a1a1a;">2</span>
<span style="left:631.50px;top:976.87px;font-size:13.5px;line-height:13.5px;color:#1a1a1a;font-style:italic;transform:scaleX(1.0390);transform-origin:0 0;">π</span>
<span style="left:641.00px;top:976.03px;font-size:14.5px;line-height:14.5px;color:#1a1a1a;font-style:italic;transform:scaleX(1.1411);transform-origin:0 0;">f</span>
<div style="left:376px;top:1015.7px;width:13.5px;height:13px;background:#fff;border:1px solid #6a6a6a;box-sizing:border-box;border-radius:1px;"></div>
<svg style="left:376px;top:1015px;" width="14" height="14" viewBox="0.000 -0.700 14.000 14.000"><path d="M3 6.6l2.8 3 5-6.4" stroke="#222" stroke-width="1.6" fill="none"/></svg>
<span style="left:395.00px;top:1015.96px;font-size:12px;line-height:12px;color:#111;letter-spacing:0.008px;">Show approximation data</span>
<div style="left:375px;top:1036px;width:415px;height:50px;background:#f6f6f6;border:1px solid #c6c6c6;box-sizing:border-box;"></div>
<div style="left:376px;top:1037.2px;width:411.5px;height:25.5px;background:#efefef;"></div>
<div style="left:375px;top:1083.2px;width:415px;height:3.3px;background:#cbcbcb;"></div>
<div style="left:787.5px;top:1037px;width:2.5px;height:47px;background:#cfcfcf;"></div>
<svg style="left:379px;top:1040px;" width="11" height="9" viewBox="-0.600 -0.200 11.000 9.000"><path d="M0.5 0.3l4 3.7-4 3.7zM5.2 0.3l4 3.7-4 3.7z" fill="#111"/></svg>
<span style="left:394.00px;top:1046.66px;font-size:12px;line-height:12px;color:#111;letter-spacing:0.049px;">Shear modulus, long-term contribution (Pa)</span>
<span style="left:379.50px;top:1067.56px;font-size:12px;line-height:12px;color:#111;transform:scaleX(0.8937);transform-origin:0 0;">-3.6088E8</span>
<div style="left:375px;top:1093px;width:415px;height:144.4px;background:#fff;border:1px solid #c6c6c6;box-sizing:border-box;"></div>
<div style="left:376px;top:1094.5px;width:411.5px;height:130.3px;background:#f7f7f7;"></div>
<div style="left:376px;top:1094.5px;width:411.5px;height:25.5px;background:#efefef;"></div>
<div style="left:375px;top:1234.4px;width:415px;height:3.2px;background:#cdcdcd;"></div>
<div style="left:787.5px;top:1094.5px;width:2.5px;height:140px;background:#cfcfcf;"></div>
<svg style="left:379px;top:1097px;" width="11" height="8" viewBox="-0.600 0.000 11.000 8.000"><path d="M0.5 0.3l4 3.7-4 3.7zM5.2 0.3l4 3.7-4 3.7z" fill="#111"/></svg>
<div style="left:455px;top:1094.5px;width:1px;height:130.5px;background:#a9a9a9;"></div>
<div style="left:621px;top:1094.5px;width:1px;height:130.5px;background:#a9a9a9;"></div>
<div style="left:787px;top:1094.5px;width:1px;height:130.5px;background:#a9a9a9;"></div>
<div style="left:376px;top:1140.2px;width:412px;height:1px;background:#a9a9a9;"></div>
<div style="left:376px;top:1161.2px;width:412px;height:1px;background:#a9a9a9;"></div>
<div style="left:376px;top:1182.2px;width:412px;height:1px;background:#a9a9a9;"></div>
<div style="left:376px;top:1203.2px;width:412px;height:1px;background:#a9a9a9;"></div>
<div style="left:376px;top:1224.2px;width:412px;height:1px;background:#a9a9a9;"></div>
<span style="left:394.00px;top:1103.66px;font-size:12px;line-height:12px;color:#111;letter-spacing:-0.172px;">Branch</span>
<span style="left:461.20px;top:1103.66px;font-size:12px;line-height:12px;color:#111;letter-spacing:-0.234px;">Shear modulus (Pa)</span>
<span style="left:627.20px;top:1103.66px;font-size:12px;line-height:12px;color:#111;letter-spacing:-0.133px;">Relaxation time (s)</span>
<span style="left:379.50px;top:1124.56px;font-size:12px;line-height:12px;color:#111;">1</span>
<span style="left:459.00px;top:1124.56px;font-size:12px;line-height:12px;color:#111;transform:scaleX(0.8795);transform-origin:0 0;">3.1542E8</span>
<span style="left:625.00px;top:1124.56px;font-size:12px;line-height:12px;color:#111;transform:scaleX(0.9027);transform-origin:0 0;">2.9887E-5</span>
<span style="left:379.50px;top:1145.56px;font-size:12px;line-height:12px;color:#111;">2</span>
<span style="left:459.00px;top:1145.56px;font-size:12px;line-height:12px;color:#111;transform:scaleX(0.8795);transform-origin:0 0;">4.7355E7</span>
<span style="left:625.00px;top:1145.56px;font-size:12px;line-height:12px;color:#111;transform:scaleX(0.9027);transform-origin:0 0;">2.0074E-4</span>
<span style="left:379.50px;top:1166.56px;font-size:12px;line-height:12px;color:#111;">3</span>
<span style="left:459.00px;top:1166.56px;font-size:12px;line-height:12px;color:#111;transform:scaleX(0.8795);transform-origin:0 0;">2.3209E7</span>
<span style="left:625.00px;top:1166.56px;font-size:12px;line-height:12px;color:#111;transform:scaleX(0.9027);transform-origin:0 0;">8.6217E-4</span>
<span style="left:379.50px;top:1187.56px;font-size:12px;line-height:12px;color:#111;">4</span>
<span style="left:459.00px;top:1187.56px;font-size:12px;line-height:12px;color:#111;transform:scaleX(0.8795);transform-origin:0 0;">1.0768E7</span>
<span style="left:625.00px;top:1187.56px;font-size:12px;line-height:12px;color:#111;transform:scaleX(0.9042);transform-origin:0 0;">0.0045610</span>
<span style="left:379.50px;top:1208.56px;font-size:12px;line-height:12px;color:#111;">5</span>
<span style="left:459.00px;top:1208.56px;font-size:12px;line-height:12px;color:#111;transform:scaleX(0.8795);transform-origin:0 0;">3.6595E8</span>
<span style="left:625.00px;top:1208.56px;font-size:12px;line-height:12px;color:#111;transform:scaleX(0.8991);transform-origin:0 0;">2.0732</span>
<div style="left:370px;top:1249px;width:425px;height:1px;background:#dadbde;"></div>
<svg style="left:376px;top:1258px;" width="8" height="11" viewBox="-0.700 -0.700 8.000 11.000"><path d="M1.3 1l3.8 4-3.8 4" stroke="#222" stroke-width="1.4" fill="none"/></svg>
<span style="left:396.50px;top:1256.74px;font-size:13px;line-height:13px;color:#2e5c9e;letter-spacing:0.141px;">Discretization</span>
<div style="left:802px;top:170.5px;width:1186.5px;height:976.5px;background:#fafbfd;border-radius:4px 4px 0 0;"></div>
<div style="left:802px;top:226px;width:1186.5px;height:921px;background:#fff;"></div>
<div style="left:802px;top:201px;width:1186.5px;height:1px;background:#d9dce1;"></div>
<span style="left:814.50px;top:179.04px;font-size:13px;line-height:13px;color:#333;letter-spacing:-0.254px;">Graphics</span>
<span style="left:892.00px;top:179.04px;font-size:13px;line-height:13px;color:#2f78bd;letter-spacing:0.050px;">Approximation Preview</span>
<svg style="left:1034px;top:181px;" width="9" height="10" viewBox="0.000 -0.500 9.000 10.000"><path d="M0.5 0.5l8 8M8.5 0.5l-8 8" stroke="#2f78bd" stroke-width="1.3" fill="none"/></svg>
<div style="left:888px;top:199px;width:162px;height:2px;background:#3f7aa8;"></div>
<svg style="left:1947px;top:178px;" width="40" height="14" viewBox="0.000 -0.300 40.000 14.000"><path d="M1 3.800h8l-4 4.200z" fill="#a9c9e6"/><rect x="15.600" y="2.400" width="7.800" height="6.900" fill="none" stroke="#a9c9e6" stroke-width="1"/><path d="M15.100 2.900h8.800" stroke="#a9c9e6" stroke-width="2"/><path d="M32 1.800h5v6h-5zM31 7.800h7v1h-7zM34 8.800h1v3.400h-1z" fill="#a9c9e6"/></svg>
<svg style="left:808px;top:205px;" width="16" height="16" viewBox="0.000 0.000 16.000 16.000"><circle cx="7" cy="6.800" r="4.800" fill="#f2f7fc" stroke="#2e7fc2" stroke-width="1.400"/><path d="M10.600 10.400l4.600 4.600" stroke="#2e7fc2" stroke-width="2.100"/><path d="M4.400 6.800h5.200M7 4.200v5.200" stroke="#2e7fc2" stroke-width="1.300"/></svg>
<svg style="left:831px;top:205px;" width="16" height="16" viewBox="0.000 0.000 16.000 16.000"><circle cx="7" cy="6.800" r="4.800" fill="#f2f7fc" stroke="#2e7fc2" stroke-width="1.400"/><path d="M10.600 10.400l4.600 4.600" stroke="#2e7fc2" stroke-width="2.100"/><path d="M4.400 6.800h5.200" stroke="#2e7fc2" stroke-width="1.300"/></svg>
<svg style="left:854px;top:205px;" width="18" height="16" viewBox="-0.100 0.000 18.000 16.000"><rect x="0.700" y="6.200" width="8.600" height="8.600" fill="none" stroke="#2e7fc2" stroke-width="1.200" stroke-dasharray="2.200 1.400"/><circle cx="9.200" cy="6.400" r="4.600" fill="#f2f7fc" stroke="#2e7fc2" stroke-width="1.400"/><path d="M6.800 6.400h4.800M9.200 4v4.800" stroke="#2e7fc2" stroke-width="1.200"/><path d="M12.600 9.800l4 4.600" stroke="#2e7fc2" stroke-width="2.100"/></svg>
<svg style="left:876px;top:211px;" width="9" height="5" viewBox="-0.400 0.000 9.000 5.000"><path d="M0.3 0.3h7.4l-3.7 4.2z" fill="#111"/></svg>
<svg style="left:895px;top:205px;" width="17" height="16" viewBox="-0.300 0.000 17.000 16.000"><rect x="0.900" y="0.900" width="14.200" height="14.200" fill="#fff" stroke="#808080" stroke-width="1"/><path d="M8 5.800v4.400M5.800 8h4.400" stroke="#808080" stroke-width="1"/><path d="M8 1.800l2.200 2.600H5.800zM8 14.200l2.200-2.600H5.800zM1.800 8l2.600-2.200v4.400zM14.200 8l-2.600-2.200v4.400z" fill="#3f7fba"/></svg>
<div style="left:918.8px;top:204.5px;width:1px;height:17px;background:#c9ced6;"></div>
<svg style="left:927px;top:205px;" width="16" height="16" viewBox="0.000 0.000 16.000 16.000"><rect x="3.400" y="0.600" width="11.400" height="13" fill="#e1eefa"/><path d="M3.400 3.800h11.400M3.400 7h11.400M3.400 10.200h11.400" stroke="#c3dcf2" stroke-width="0.600"/><path d="M4 0.600v13M7.400 0.600v13M10.800 0.600v13M14.200 0.600v13" stroke="#54708f" stroke-width="1.100"/><path d="M6 0.600v13M12.400 0.600v13" stroke="#4d8fd0" stroke-width="0.700"/><path d="M1.400 0.800v13.800h14" stroke="#555" stroke-width="1.100" stroke-dasharray="1.100 1.500" fill="none"/></svg>
<svg style="left:950px;top:205px;" width="16" height="16" viewBox="0.000 0.000 16.000 16.000"><rect x="2.600" y="0.800" width="13" height="12.200" fill="#e1eefa"/><path d="M5.800 0.800v12.200M9 0.800v12.200M12.200 0.800v12.200" stroke="#c3dcf2" stroke-width="0.600"/><path d="M2.600 1.400h13M2.600 4.800h13M2.600 8.200h13M2.600 11.600h13" stroke="#54708f" stroke-width="1.100"/><path d="M1.400 0.800v13.800h14" stroke="#555" stroke-width="1.100" stroke-dasharray="1.100 1.500" fill="none"/></svg>
<div style="left:970.7px;top:203px;width:20px;height:20.5px;background:#cfe3f5;border:1px solid #9cc3e6;box-sizing:border-box;border-radius:2px;"></div>
<svg style="left:972px;top:205px;" width="17" height="16" viewBox="-0.700 -0.500 17.000 16.000"><defs><linearGradient id="lgd" x1="0" y1="0" x2="0" y2="1"><stop offset="0" stop-color="#2e5fb8"/><stop offset="0.450" stop-color="#e8b23a"/><stop offset="1" stop-color="#d9352f"/></linearGradient></defs><rect x="0.700" y="0.700" width="14.600" height="13.600" fill="#dfebf7" stroke="#5e5e5e" stroke-width="1.200"/><rect x="10.400" y="2.400" width="2.800" height="10.200" fill="url(#lgd)"/></svg>
<div style="left:994px;top:203px;width:20px;height:20.5px;background:#cfe3f5;border:1px solid #9cc3e6;box-sizing:border-box;border-radius:2px;"></div>
<svg style="left:996px;top:205px;" width="16" height="16" viewBox="-0.500 -0.500 16.000 16.000"><path d="M0.800 0.800h13.400v9.600H10.200l1.200 3.800-4.800-3.800H0.800z" fill="#eef4fb" stroke="#5e5e5e" stroke-width="1.100"/><path d="M4 3.400h7M4 5.600h7M4 7.800h7" stroke="#4d7fc0" stroke-width="0.900"/></svg>
<div style="left:1018.8px;top:204.5px;width:1px;height:17px;background:#c9ced6;"></div>
<svg style="left:1029px;top:206px;" width="12" height="14" viewBox="0.000 0.000 12.000 14.000"><path d="M2.800 6.400V4.200a3.200 3.200 0 0 1 6.400 0v2.200" fill="none" stroke="#2e7fc2" stroke-width="1.600"/><rect x="0.400" y="6" width="11.200" height="7.600" rx="0.800" fill="#2e7fc2"/></svg>
<div style="left:1049.8px;top:204.5px;width:1px;height:17px;background:#c9ced6;"></div>
<svg style="left:1058px;top:204px;" width="16" height="18" viewBox="-0.200 -0.500 16.000 18.000"><path d="M8.600 0.800c3.800 0 6 2.600 5.600 6-0.400 3-2.600 3.200-3.600 4.200-1.200 1.200 0.600 3-1.400 4.600C6.800 17.400 1 14.800 1 9 1 4 4.400 0.800 8.600 0.800z" fill="#d9d9d9" stroke="#7f7f7f" stroke-width="1"/><circle cx="9.600" cy="4.400" r="1.700" fill="#3f7fd0"/><circle cx="5.200" cy="5.400" r="1.400" fill="#f3f3f3" stroke="#9a9a9a" stroke-width="0.500"/><circle cx="11.400" cy="8.200" r="1.200" fill="#3aa56a"/><circle cx="4.600" cy="10.800" r="1.400" fill="#d9352f"/><circle cx="8.400" cy="9.800" r="1.200" fill="#e8a23a"/><circle cx="6.600" cy="13.600" r="1.100" fill="#d9352f"/></svg>
<svg style="left:1078px;top:211px;" width="8" height="5" viewBox="0.000 0.000 8.000 5.000"><path d="M0.3 0.3h7.4l-3.7 4.2z" fill="#111"/></svg>
<div style="left:1097.5px;top:204.5px;width:1px;height:17px;background:#c9ced6;"></div>
<svg style="left:1106px;top:205px;" width="16" height="16" viewBox="0.000 0.000 16.000 16.000"><circle cx="8" cy="8" r="7.2" fill="#2e7fc2"/><path d="M10.68 9.55L8.00 11.10L5.32 9.55L5.32 6.45L8.00 4.90L10.68 6.45z" fill="#fafbfd"/><path d="M8.00 11.10L2.37 14.35M5.32 9.55L-0.31 6.30M5.32 6.45L5.32 -0.05M8.00 4.90L13.63 1.65M10.68 6.45L16.31 9.70M10.68 9.55L10.68 16.05" stroke="#fafbfd" stroke-width="1.100" fill="none"/></svg>
<svg style="left:1127px;top:211px;" width="9" height="5" viewBox="-0.300 0.000 9.000 5.000"><path d="M0.3 0.3h7.4l-3.7 4.2z" fill="#111"/></svg>
<svg style="left:1146px;top:206px;" width="18" height="14" viewBox="-0.300 -0.500 18.000 14.000"><path d="M0.6 2.6h3.6l1.4-2h5.8l1.4 2h3.600v9.800H0.600z" fill="#2e7fc2"/><circle cx="8.500" cy="7.200" r="3.100" fill="#fff"/><circle cx="8.500" cy="7.200" r="1.900" fill="#2e7fc2"/></svg>
<svg style="left:1170px;top:205px;" width="16" height="16" viewBox="0.000 0.000 16.000 16.000"><rect x="3.4" y="0.8" width="9.2" height="4.6" fill="#fff" stroke="#4d9ad6" stroke-width="1.2"/><rect x="0.8" y="5" width="14.4" height="6.8" rx="1" fill="#cfe3f5" stroke="#4d9ad6" stroke-width="1.2"/><rect x="3.4" y="9.6" width="9.2" height="5.600" fill="#fff" stroke="#4d9ad6" stroke-width="1.2"/></svg>
<svg style="left:0;top:0" width="1992" height="1310" viewBox="0 0 1992 1310"><path d="M926.5 271.5V1104.4" stroke="#eeeeee" stroke-width="1"/><path d="M996.6 271.5V1104.4" stroke="#eeeeee" stroke-width="1"/><path d="M1066.6 271.5V1104.4" stroke="#eeeeee" stroke-width="1"/><path d="M1136.7 271.5V1104.4" stroke="#eeeeee" stroke-width="1"/><path d="M1206.8 271.5V1104.4" stroke="#eeeeee" stroke-width="1"/><path d="M1276.9 271.5V1104.4" stroke="#eeeeee" stroke-width="1"/><path d="M1346.9 271.5V1104.4" stroke="#eeeeee" stroke-width="1"/><path d="M1417.0 271.5V1104.4" stroke="#eeeeee" stroke-width="1"/><path d="M1487.1 271.5V1104.4" stroke="#eeeeee" stroke-width="1"/><path d="M1557.2 271.5V1104.4" stroke="#eeeeee" stroke-width="1"/><path d="M1627.2 271.5V1104.4" stroke="#eeeeee" stroke-width="1"/><path d="M1697.3 271.5V1104.4" stroke="#eeeeee" stroke-width="1"/><path d="M1767.4 271.5V1104.4" stroke="#eeeeee" stroke-width="1"/><path d="M1837.5 271.5V1104.4" stroke="#eeeeee" stroke-width="1"/><path d="M1907.5 271.5V1104.4" stroke="#eeeeee" stroke-width="1"/><path d="M856.5 1070.3H1982.3" stroke="#eeeeee" stroke-width="1"/><path d="M856.5 990.2H1982.3" stroke="#eeeeee" stroke-width="1"/><path d="M856.5 910.1H1982.3" stroke="#eeeeee" stroke-width="1"/><path d="M856.5 830.1H1982.3" stroke="#eeeeee" stroke-width="1"/><path d="M856.5 750.0H1982.3" stroke="#eeeeee" stroke-width="1"/><path d="M856.5 669.9H1982.3" stroke="#eeeeee" stroke-width="1"/><path d="M856.5 589.8H1982.3" stroke="#eeeeee" stroke-width="1"/><path d="M856.5 509.7H1982.3" stroke="#eeeeee" stroke-width="1"/><path d="M856.5 429.7H1982.3" stroke="#eeeeee" stroke-width="1"/><path d="M856.5 349.6H1982.3" stroke="#eeeeee" stroke-width="1"/><path d="M926.5 271.5v6.5M926.5 1104.4v-6.5M996.6 271.5v6.5M996.6 1104.4v-6.5M1066.6 271.5v6.5M1066.6 1104.4v-6.5M1136.7 271.5v6.5M1136.7 1104.4v-6.5M1206.8 271.5v6.5M1206.8 1104.4v-6.5M1276.9 271.5v6.5M1276.9 1104.4v-6.5M1346.9 271.5v6.5M1346.9 1104.4v-6.5M1417.0 271.5v6.5M1417.0 1104.4v-6.5M1487.1 271.5v6.5M1487.1 1104.4v-6.5M1557.2 271.5v6.5M1557.2 1104.4v-6.5M1627.2 271.5v6.5M1627.2 1104.4v-6.5M1697.3 271.5v6.5M1697.3 1104.4v-6.5M1767.4 271.5v6.5M1767.4 1104.4v-6.5M1837.5 271.5v6.5M1837.5 1104.4v-6.5M1907.5 271.5v6.5M1907.5 1104.4v-6.5M1977.6 271.5v6.5M1977.6 1104.4v-6.5M856.5 1070.3h6.5M1982.3 1070.3h-6.5M856.5 990.2h6.5M1982.3 990.2h-6.5M856.5 910.1h6.5M1982.3 910.1h-6.5M856.5 830.1h6.5M1982.3 830.1h-6.5M856.5 750.0h6.5M1982.3 750.0h-6.5M856.5 669.9h6.5M1982.3 669.9h-6.5M856.5 589.8h6.5M1982.3 589.8h-6.5M856.5 509.7h6.5M1982.3 509.7h-6.5M856.5 429.7h6.5M1982.3 429.7h-6.5M856.5 349.6h6.5M1982.3 349.6h-6.5" stroke="#555" stroke-width="1" fill="none"/><rect x="856.5" y="271.5" width="1125.8" height="832.9" fill="none" stroke="#727272" stroke-width="1"/><polyline points="867.9,1093.8 870.9,1085.7 875.0,1075.9 879.0,1066.0 884.9,1054.0 892.0,1040.0 900.9,1023.7 913.0,1005.7 927.0,984.9 945.8,960.8 967.9,932.8 997.0,900.6 1034.1,863.9 1078.9,824.7 1137.1,780.3 1209.7,728.4 1301.1,668.9 1416.2,599.9 1559.9,522.0 1743.1,432.0 1971.9,329.9" fill="none" stroke="#4a66c8" stroke-width="1.15"/><polyline points="867.9,1072.7 870.9,1062.7 875.0,1051.9 879.0,1039.0 884.9,1025.1 892.0,1009.0 900.9,991.0 913.0,969.8 927.0,947.1 945.8,920.8 967.9,890.9 997.0,857.9 1034.1,820.0 1078.9,778.2 1137.1,729.8 1209.7,676.0 1301.1,615.1 1416.2,546.6 1559.9,468.7 1743.1,381.8 1971.9,282.8" fill="none" stroke="#5fbf6d" stroke-width="1.15"/><rect x="865.0" y="1090.9" width="5.8" height="5.8" fill="#1f45d6"/><rect x="868.0" y="1082.8" width="5.8" height="5.8" fill="#1f45d6"/><rect x="872.1" y="1073.0" width="5.8" height="5.8" fill="#1f45d6"/><rect x="876.1" y="1063.1" width="5.8" height="5.8" fill="#1f45d6"/><rect x="882.0" y="1051.1" width="5.8" height="5.8" fill="#1f45d6"/><rect x="889.1" y="1037.1" width="5.8" height="5.8" fill="#1f45d6"/><rect x="898.0" y="1020.8" width="5.8" height="5.8" fill="#1f45d6"/><rect x="910.1" y="1002.8" width="5.8" height="5.8" fill="#1f45d6"/><rect x="924.1" y="982.0" width="5.8" height="5.8" fill="#1f45d6"/><rect x="942.9" y="957.9" width="5.8" height="5.8" fill="#1f45d6"/><rect x="965.0" y="930.9" width="5.8" height="5.8" fill="#1f45d6"/><rect x="994.1" y="900.9" width="5.8" height="5.8" fill="#1f45d6"/><rect x="1031.2" y="865.2" width="5.8" height="5.8" fill="#1f45d6"/><rect x="1076.0" y="825.0" width="5.8" height="5.8" fill="#1f45d6"/><rect x="1134.2" y="778.9" width="5.8" height="5.8" fill="#1f45d6"/><rect x="1206.8" y="726.0" width="5.8" height="5.8" fill="#1f45d6"/><rect x="1298.2" y="666.0" width="5.8" height="5.8" fill="#1f45d6"/><rect x="1413.3" y="597.0" width="5.8" height="5.8" fill="#1f45d6"/><rect x="1557.0" y="519.1" width="5.8" height="5.8" fill="#1f45d6"/><rect x="1740.2" y="429.1" width="5.8" height="5.8" fill="#1f45d6"/><rect x="1969.0" y="327.0" width="5.8" height="5.8" fill="#1f45d6"/><rect x="865.0" y="1069.8" width="5.8" height="5.8" fill="#2fae46"/><rect x="868.0" y="1059.8" width="5.8" height="5.8" fill="#2fae46"/><rect x="872.1" y="1049.0" width="5.8" height="5.8" fill="#2fae46"/><rect x="876.1" y="1036.1" width="5.8" height="5.8" fill="#2fae46"/><rect x="882.0" y="1022.2" width="5.8" height="5.8" fill="#2fae46"/><rect x="889.1" y="1006.1" width="5.8" height="5.8" fill="#2fae46"/><rect x="898.0" y="988.1" width="5.8" height="5.8" fill="#2fae46"/><rect x="910.1" y="966.9" width="5.8" height="5.8" fill="#2fae46"/><rect x="924.1" y="944.2" width="5.8" height="5.8" fill="#2fae46"/><rect x="942.9" y="917.9" width="5.8" height="5.8" fill="#2fae46"/><rect x="965.0" y="888.0" width="5.8" height="5.8" fill="#2fae46"/><rect x="994.1" y="855.0" width="5.8" height="5.8" fill="#2fae46"/><rect x="1031.2" y="817.1" width="5.8" height="5.8" fill="#2fae46"/><rect x="1076.0" y="775.3" width="5.8" height="5.8" fill="#2fae46"/><rect x="1134.2" y="726.9" width="5.8" height="5.8" fill="#2fae46"/><rect x="1206.8" y="673.1" width="5.8" height="5.8" fill="#2fae46"/><rect x="1298.2" y="612.2" width="5.8" height="5.8" fill="#2fae46"/><rect x="1413.3" y="543.7" width="5.8" height="5.8" fill="#2fae46"/><rect x="1557.0" y="465.8" width="5.8" height="5.8" fill="#2fae46"/><rect x="1740.2" y="378.9" width="5.8" height="5.8" fill="#2fae46"/><rect x="1969.0" y="279.9" width="5.8" height="5.8" fill="#2fae46"/><rect x="1855.3" y="663.6" width="111.5" height="54" fill="#8a8a8a"/><rect x="1858.4" y="660.4" width="111.4" height="54" fill="#fff" stroke="#000" stroke-width="1.1"/><path d="M1866.7 675.4H1892" stroke="#3a5bc0" stroke-width="1.1"/><path d="M1866.7 698.4H1892" stroke="#55b866" stroke-width="1.1"/></svg>
<span style="left:1898.50px;top:669.04px;font-size:13px;line-height:13px;color:#111;letter-spacing:-0.136px;">real(G_q)</span>
<span style="left:1898.50px;top:691.84px;font-size:13px;line-height:13px;color:#111;letter-spacing:0.086px;">imag(G_q)</span>
<span style="left:916.30px;top:1111.84px;font-size:13px;line-height:13px;color:#111;letter-spacing:0.366px;">100</span>
<span style="left:986.38px;top:1111.84px;font-size:13px;line-height:13px;color:#111;letter-spacing:0.366px;">200</span>
<span style="left:1056.45px;top:1111.84px;font-size:13px;line-height:13px;color:#111;letter-spacing:0.366px;">300</span>
<span style="left:1126.52px;top:1111.84px;font-size:13px;line-height:13px;color:#111;letter-spacing:0.366px;">400</span>
<span style="left:1196.60px;top:1111.84px;font-size:13px;line-height:13px;color:#111;letter-spacing:0.366px;">500</span>
<span style="left:1266.67px;top:1111.84px;font-size:13px;line-height:13px;color:#111;letter-spacing:0.366px;">600</span>
<span style="left:1336.74px;top:1111.84px;font-size:13px;line-height:13px;color:#111;letter-spacing:0.366px;">700</span>
<span style="left:1406.81px;top:1111.84px;font-size:13px;line-height:13px;color:#111;letter-spacing:0.366px;">800</span>
<span style="left:1476.89px;top:1111.84px;font-size:13px;line-height:13px;color:#111;letter-spacing:0.366px;">900</span>
<span style="left:1543.06px;top:1111.84px;font-size:13px;line-height:13px;color:#111;letter-spacing:0.420px;">1000</span>
<span style="left:1613.13px;top:1111.84px;font-size:13px;line-height:13px;color:#111;letter-spacing:0.658px;">1100</span>
<span style="left:1683.21px;top:1111.84px;font-size:13px;line-height:13px;color:#111;letter-spacing:0.420px;">1200</span>
<span style="left:1753.28px;top:1111.84px;font-size:13px;line-height:13px;color:#111;letter-spacing:0.420px;">1300</span>
<span style="left:1823.35px;top:1111.84px;font-size:13px;line-height:13px;color:#111;letter-spacing:0.420px;">1400</span>
<span style="left:1893.43px;top:1111.84px;font-size:13px;line-height:13px;color:#111;letter-spacing:0.420px;">1500</span>
<span style="left:845.00px;top:1063.94px;font-size:13px;line-height:13px;color:#111;letter-spacing:-0.234px;">1</span>
<span style="left:845.00px;top:983.86px;font-size:13px;line-height:13px;color:#111;letter-spacing:-0.234px;">2</span>
<span style="left:845.00px;top:903.78px;font-size:13px;line-height:13px;color:#111;letter-spacing:-0.234px;">3</span>
<span style="left:845.00px;top:823.70px;font-size:13px;line-height:13px;color:#111;letter-spacing:-0.234px;">4</span>
<span style="left:845.00px;top:743.62px;font-size:13px;line-height:13px;color:#111;letter-spacing:-0.234px;">5</span>
<span style="left:845.00px;top:663.54px;font-size:13px;line-height:13px;color:#111;letter-spacing:-0.234px;">6</span>
<span style="left:845.00px;top:583.46px;font-size:13px;line-height:13px;color:#111;letter-spacing:-0.234px;">7</span>
<span style="left:845.00px;top:503.38px;font-size:13px;line-height:13px;color:#111;letter-spacing:-0.234px;">8</span>
<span style="left:845.00px;top:423.30px;font-size:13px;line-height:13px;color:#111;letter-spacing:-0.234px;">9</span>
<span style="left:837.20px;top:343.22px;font-size:13px;line-height:13px;color:#111;letter-spacing:0.166px;">10</span>
<span style="left:1374.25px;top:1128.14px;font-size:13px;line-height:13px;color:#111;letter-spacing:0.209px;">Frequency (Hz)</span>
<span style="left:804.60px;top:272.40px;font-size:15px;line-height:15px;color:#111;">×</span>
<span style="left:813.60px;top:273.64px;font-size:13px;line-height:13px;color:#111;letter-spacing:0.366px;">10</span>
<span style="left:830.00px;top:268.74px;font-size:10.5px;line-height:10.5px;color:#111;">7</span>
<span style="left:1413.00px;top:240.30px;font-size:13px;line-height:13px;color:#111;font-style:italic;">G</span>
<span style="left:1422.30px;top:246.16px;font-size:9.5px;line-height:9.5px;color:#111;">q</span>
<svg style="left:1963px;top:229px;" width="22" height="23" viewBox="0.000 -0.300 22.000 23.000"><defs><linearGradient id="LGb" x1="0" y1="0" x2="1" y2="0"><stop offset="0" stop-color="#f6f28a"/><stop offset="0.38" stop-color="#f3e960"/><stop offset="0.62" stop-color="#55b0e6"/><stop offset="1" stop-color="#1f4fae"/></linearGradient><radialGradient id="LHb"><stop offset="0.6" stop-color="#d2d2d7" stop-opacity="1"/><stop offset="1" stop-color="#e8e8ec" stop-opacity="0"/></radialGradient></defs><ellipse cx="11" cy="11.400" rx="10.500" ry="9.800" fill="url(#LHb)" transform="rotate(-18 11 11.400)"/><rect x="4.1" y="6.3" width="13.7" height="10.6" rx="2.2" fill="#1c3a96"/><path d="M7 8.3h9.6v7h-9.6z" fill="url(#LGb)"/><path d="M0 8.3h0v7h-0z" fill="#1c3a96" opacity="0.0"/></svg>
<div style="left:802px;top:1154px;width:1186.5px;height:126px;background:#fafbfd;border-radius:4px 4px 0 0;"></div>
<div style="left:802px;top:1185px;width:1186.5px;height:1px;background:#dcdde0;"></div>
<span style="left:814.00px;top:1163.14px;font-size:13px;line-height:13px;color:#2f5a9b;letter-spacing:-0.094px;">Messages</span>
<svg style="left:881px;top:1166px;" width="9" height="8" viewBox="-0.500 0.000 9.000 8.000"><path d="M0.5 0.5l7 7M7.5 0.5l-7 7" stroke="#b5b5b5" stroke-width="1.1" fill="none"/></svg>
<div style="left:810px;top:1183px;width:87px;height:2px;background:#3f7aa8;"></div>
<span style="left:920.00px;top:1163.14px;font-size:13px;line-height:13px;color:#333;letter-spacing:-0.066px;">Progress</span>
<span style="left:999.00px;top:1163.14px;font-size:13px;line-height:13px;color:#333;letter-spacing:0.099px;">Log</span>
<svg style="left:1947px;top:1162px;" width="40" height="14" viewBox="0.000 -0.300 40.000 14.000"><path d="M1 3.800h8l-4 4.200z" fill="#bcc3cc"/><rect x="15.600" y="2.400" width="7.800" height="6.900" fill="none" stroke="#bcc3cc" stroke-width="1"/><path d="M15.100 2.900h8.800" stroke="#bcc3cc" stroke-width="2"/><path d="M32 1.800h5v6h-5zM31 7.800h7v1h-7zM34 8.800h1v3.400h-1z" fill="#bcc3cc"/></svg>
<svg style="left:811px;top:1188px;" width="13" height="18" viewBox="-0.200 -0.700 13.000 18.000"><path d="M1.400 0.800l3.200 8" stroke="#7a7a7a" stroke-width="1.500"/><path d="M3.600 7.400l2.200-0.600 5.400 7.400-2.400 0.600-1 1.400-1.600-0.600-1.400 0.800z" fill="#e9b567"/><path d="M5 9l1.800 6M6.400 8.600l3 5.600" stroke="#d99a3f" stroke-width="0.600"/></svg>
<svg style="left:831px;top:1189px;" width="18" height="15" viewBox="-0.500 -0.600 18.000 15.000"><rect x="0.600" y="0.600" width="12" height="9" fill="#fff" stroke="#2e7fc2" stroke-width="1.100"/><path d="M0.600 1.400h12" stroke="#2e7fc2" stroke-width="1.800"/><rect x="4.400" y="4.600" width="12" height="8.800" fill="#fff" stroke="#2e7fc2" stroke-width="1.100"/><path d="M6.200 7.400h8.400v4.400H6.200zM6.200 7.400l4.200 2.800 4.200-2.800" fill="none" stroke="#2e7fc2" stroke-width="0.900"/></svg>
<div style="left:806.3px;top:1210px;width:1178.3px;height:65.2px;background:#fdfdfe;border:1px solid #d6d6d9;box-sizing:border-box;"></div>
<span style="left:1315.00px;top:1290.76px;font-size:12px;line-height:12px;color:#111;letter-spacing:-0.638px;">1.73 GB | 2.44 GB</span>
</body></html>
